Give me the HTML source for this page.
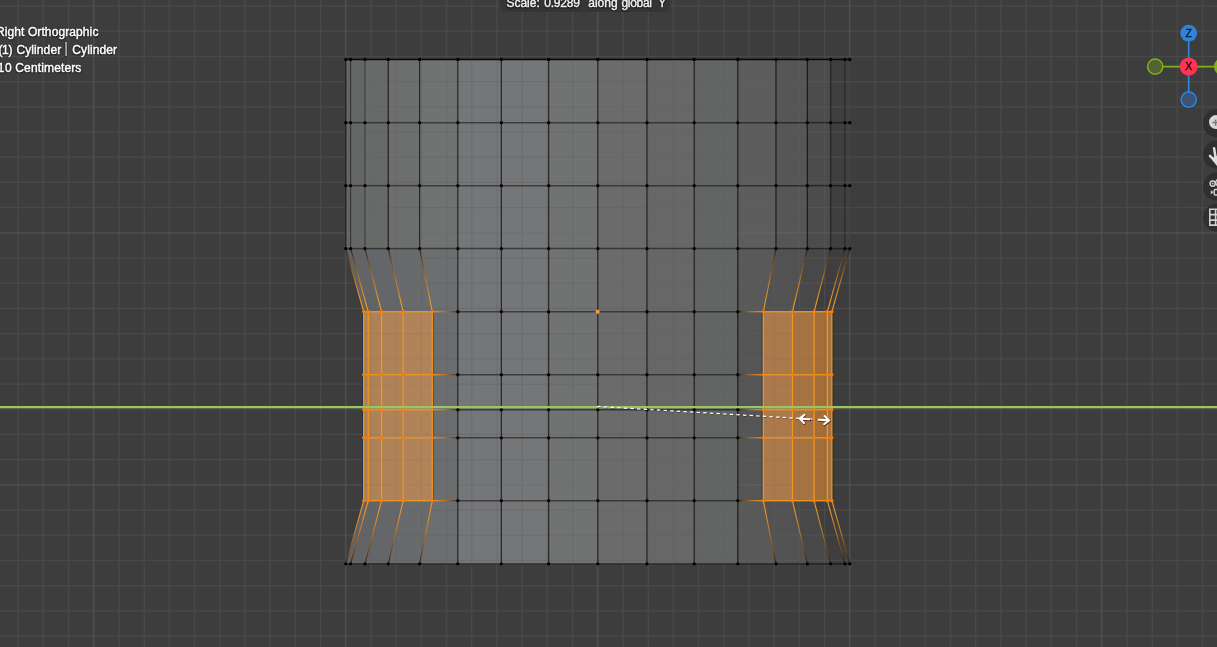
<!DOCTYPE html>
<html><head><meta charset="utf-8"><title>Blender viewport</title>
<style>
html,body{margin:0;padding:0;background:#3d3d3d;}
body{width:1217px;height:647px;overflow:hidden;position:relative;font-family:"Liberation Sans",sans-serif;}
.layer{position:absolute;left:0;top:0;width:1217px;height:647px;transform:translateZ(0);will-change:transform}
.w,.h{position:absolute;white-space:pre;color:#fff}
.w{text-shadow:0 1px 1.5px rgba(0,0,0,.95),0 0 2px rgba(0,0,0,.75);-webkit-text-stroke:0.42px #fff}
.h{color:#f2f2f2;-webkit-text-stroke:0.4px #f2f2f2;text-shadow:0 1px 1.5px rgba(0,0,0,.95),0 0 2px rgba(0,0,0,.8)}
.bar{-webkit-text-stroke:0;transform:scaleX(.8)}
.ln{font-size:0;line-height:0;height:0}
.hdr{position:absolute;left:500.3px;top:-8px;width:170px;height:20.2px;background:#353535;border-radius:0 0 6px 6px;}
</style></head><body>
<svg width="1217" height="647" viewBox="0 0 1217 647" style="position:absolute;left:0;top:0;transform:translateZ(0);will-change:transform">
<defs><clipPath id="mc"><polygon points="345.8,59.5 345.8,122.65 345.8,185.65 345.8,248.6 363.72,311.75 363.72,374.75 363.72,409.75 363.72,437.8 363.72,500.7 345.8,563.8 849.8,563.8 831.88,500.7 831.88,437.8 831.88,409.75 831.88,374.75 831.88,311.75 849.8,248.6 849.8,185.65 849.8,122.65 849.8,59.5"/></clipPath></defs>
<rect width="1217" height="647" fill="#3d3d3d"/>
<g stroke="none">
<polygon points="345.8,59.5 350.64,59.5 350.64,122.65 345.8,122.65" fill="#646566" stroke="#646566" stroke-width="0.6"/>
<polygon points="350.64,59.5 364.98,59.5 364.98,122.65 350.64,122.65" fill="#656666" stroke="#656666" stroke-width="0.6"/>
<polygon points="364.98,59.5 388.27,59.5 388.27,122.65 364.98,122.65" fill="#686a69" stroke="#686a69" stroke-width="0.6"/>
<polygon points="388.27,59.5 419.61,59.5 419.61,122.65 388.27,122.65" fill="#6d6e6e" stroke="#6d6e6e" stroke-width="0.6"/>
<polygon points="419.61,59.5 457.8,59.5 457.8,122.65 419.61,122.65" fill="#717272" stroke="#717272" stroke-width="0.6"/>
<polygon points="457.8,59.5 501.36,59.5 501.36,122.65 457.8,122.65" fill="#757678" stroke="#757678" stroke-width="0.6"/>
<polygon points="501.36,59.5 548.64,59.5 548.64,122.65 501.36,122.65" fill="#757677" stroke="#757677" stroke-width="0.6"/>
<polygon points="548.64,59.5 597.8,59.5 597.8,122.65 548.64,122.65" fill="#717372" stroke="#717372" stroke-width="0.6"/>
<polygon points="597.8,59.5 646.96,59.5 646.96,122.65 597.8,122.65" fill="#6b6b6b" stroke="#6b6b6b" stroke-width="0.6"/>
<polygon points="646.96,59.5 694.24,59.5 694.24,122.65 646.96,122.65" fill="#676767" stroke="#676767" stroke-width="0.6"/>
<polygon points="694.24,59.5 737.8,59.5 737.8,122.65 694.24,122.65" fill="#636464" stroke="#636464" stroke-width="0.6"/>
<polygon points="737.8,59.5 775.99,59.5 775.99,122.65 737.8,122.65" fill="#5d5d5d" stroke="#5d5d5d" stroke-width="0.6"/>
<polygon points="775.99,59.5 807.33,59.5 807.33,122.65 775.99,122.65" fill="#565656" stroke="#565656" stroke-width="0.6"/>
<polygon points="807.33,59.5 830.62,59.5 830.62,122.65 807.33,122.65" fill="#4c4c4c" stroke="#4c4c4c" stroke-width="0.6"/>
<polygon points="830.62,59.5 844.96,59.5 844.96,122.65 830.62,122.65" fill="#3f3f3f" stroke="#3f3f3f" stroke-width="0.6"/>
<polygon points="844.96,59.5 849.8,59.5 849.8,122.65 844.96,122.65" fill="#414141" stroke="#414141" stroke-width="0.6"/>
<polygon points="345.8,122.65 350.64,122.65 350.64,185.65 345.8,185.65" fill="#646566" stroke="#646566" stroke-width="0.6"/>
<polygon points="350.64,122.65 364.98,122.65 364.98,185.65 350.64,185.65" fill="#656666" stroke="#656666" stroke-width="0.6"/>
<polygon points="364.98,122.65 388.27,122.65 388.27,185.65 364.98,185.65" fill="#686a69" stroke="#686a69" stroke-width="0.6"/>
<polygon points="388.27,122.65 419.61,122.65 419.61,185.65 388.27,185.65" fill="#6d6e6e" stroke="#6d6e6e" stroke-width="0.6"/>
<polygon points="419.61,122.65 457.8,122.65 457.8,185.65 419.61,185.65" fill="#717272" stroke="#717272" stroke-width="0.6"/>
<polygon points="457.8,122.65 501.36,122.65 501.36,185.65 457.8,185.65" fill="#757678" stroke="#757678" stroke-width="0.6"/>
<polygon points="501.36,122.65 548.64,122.65 548.64,185.65 501.36,185.65" fill="#757677" stroke="#757677" stroke-width="0.6"/>
<polygon points="548.64,122.65 597.8,122.65 597.8,185.65 548.64,185.65" fill="#717372" stroke="#717372" stroke-width="0.6"/>
<polygon points="597.8,122.65 646.96,122.65 646.96,185.65 597.8,185.65" fill="#6b6b6b" stroke="#6b6b6b" stroke-width="0.6"/>
<polygon points="646.96,122.65 694.24,122.65 694.24,185.65 646.96,185.65" fill="#676767" stroke="#676767" stroke-width="0.6"/>
<polygon points="694.24,122.65 737.8,122.65 737.8,185.65 694.24,185.65" fill="#636464" stroke="#636464" stroke-width="0.6"/>
<polygon points="737.8,122.65 775.99,122.65 775.99,185.65 737.8,185.65" fill="#5d5d5d" stroke="#5d5d5d" stroke-width="0.6"/>
<polygon points="775.99,122.65 807.33,122.65 807.33,185.65 775.99,185.65" fill="#565656" stroke="#565656" stroke-width="0.6"/>
<polygon points="807.33,122.65 830.62,122.65 830.62,185.65 807.33,185.65" fill="#4c4c4c" stroke="#4c4c4c" stroke-width="0.6"/>
<polygon points="830.62,122.65 844.96,122.65 844.96,185.65 830.62,185.65" fill="#3f3f3f" stroke="#3f3f3f" stroke-width="0.6"/>
<polygon points="844.96,122.65 849.8,122.65 849.8,185.65 844.96,185.65" fill="#414141" stroke="#414141" stroke-width="0.6"/>
<polygon points="345.8,185.65 350.64,185.65 350.64,248.6 345.8,248.6" fill="#646566" stroke="#646566" stroke-width="0.6"/>
<polygon points="350.64,185.65 364.98,185.65 364.98,248.6 350.64,248.6" fill="#656666" stroke="#656666" stroke-width="0.6"/>
<polygon points="364.98,185.65 388.27,185.65 388.27,248.6 364.98,248.6" fill="#686a69" stroke="#686a69" stroke-width="0.6"/>
<polygon points="388.27,185.65 419.61,185.65 419.61,248.6 388.27,248.6" fill="#6d6e6e" stroke="#6d6e6e" stroke-width="0.6"/>
<polygon points="419.61,185.65 457.8,185.65 457.8,248.6 419.61,248.6" fill="#717272" stroke="#717272" stroke-width="0.6"/>
<polygon points="457.8,185.65 501.36,185.65 501.36,248.6 457.8,248.6" fill="#757678" stroke="#757678" stroke-width="0.6"/>
<polygon points="501.36,185.65 548.64,185.65 548.64,248.6 501.36,248.6" fill="#757677" stroke="#757677" stroke-width="0.6"/>
<polygon points="548.64,185.65 597.8,185.65 597.8,248.6 548.64,248.6" fill="#717372" stroke="#717372" stroke-width="0.6"/>
<polygon points="597.8,185.65 646.96,185.65 646.96,248.6 597.8,248.6" fill="#6b6b6b" stroke="#6b6b6b" stroke-width="0.6"/>
<polygon points="646.96,185.65 694.24,185.65 694.24,248.6 646.96,248.6" fill="#676767" stroke="#676767" stroke-width="0.6"/>
<polygon points="694.24,185.65 737.8,185.65 737.8,248.6 694.24,248.6" fill="#636464" stroke="#636464" stroke-width="0.6"/>
<polygon points="737.8,185.65 775.99,185.65 775.99,248.6 737.8,248.6" fill="#5d5d5d" stroke="#5d5d5d" stroke-width="0.6"/>
<polygon points="775.99,185.65 807.33,185.65 807.33,248.6 775.99,248.6" fill="#565656" stroke="#565656" stroke-width="0.6"/>
<polygon points="807.33,185.65 830.62,185.65 830.62,248.6 807.33,248.6" fill="#4c4c4c" stroke="#4c4c4c" stroke-width="0.6"/>
<polygon points="830.62,185.65 844.96,185.65 844.96,248.6 830.62,248.6" fill="#3f3f3f" stroke="#3f3f3f" stroke-width="0.6"/>
<polygon points="844.96,185.65 849.8,185.65 849.8,248.6 844.96,248.6" fill="#414141" stroke="#414141" stroke-width="0.6"/>
<polygon points="345.8,248.6 350.64,248.6 368.22,311.75 363.72,311.75" fill="#626365" stroke="#626365" stroke-width="0.6"/>
<polygon points="350.64,248.6 364.98,248.6 381.54,311.75 368.22,311.75" fill="#636466" stroke="#636466" stroke-width="0.6"/>
<polygon points="364.98,248.6 388.27,248.6 403.17,311.75 381.54,311.75" fill="#656669" stroke="#656669" stroke-width="0.6"/>
<polygon points="388.27,248.6 419.61,248.6 432.28,311.75 403.17,311.75" fill="#696a6c" stroke="#696a6c" stroke-width="0.6"/>
<polygon points="419.61,248.6 457.8,248.6 457.8,311.75 432.28,311.75" fill="#6d6e70" stroke="#6d6e70" stroke-width="0.6"/>
<polygon points="457.8,248.6 501.36,248.6 501.36,311.75 457.8,311.75" fill="#757678" stroke="#757678" stroke-width="0.6"/>
<polygon points="501.36,248.6 548.64,248.6 548.64,311.75 501.36,311.75" fill="#757677" stroke="#757677" stroke-width="0.6"/>
<polygon points="548.64,248.6 597.8,248.6 597.8,311.75 548.64,311.75" fill="#717372" stroke="#717372" stroke-width="0.6"/>
<polygon points="597.8,248.6 646.96,248.6 646.96,311.75 597.8,311.75" fill="#6b6b6b" stroke="#6b6b6b" stroke-width="0.6"/>
<polygon points="646.96,248.6 694.24,248.6 694.24,311.75 646.96,311.75" fill="#676767" stroke="#676767" stroke-width="0.6"/>
<polygon points="694.24,248.6 737.8,248.6 737.8,311.75 694.24,311.75" fill="#636464" stroke="#636464" stroke-width="0.6"/>
<polygon points="737.8,248.6 775.99,248.6 763.32,311.75 737.8,311.75" fill="#595959" stroke="#595959" stroke-width="0.6"/>
<polygon points="775.99,248.6 807.33,248.6 792.43,311.75 763.32,311.75" fill="#525252" stroke="#525252" stroke-width="0.6"/>
<polygon points="807.33,248.6 830.62,248.6 814.06,311.75 792.43,311.75" fill="#484848" stroke="#484848" stroke-width="0.6"/>
<polygon points="830.62,248.6 844.96,248.6 827.38,311.75 814.06,311.75" fill="#3e3e3e" stroke="#3e3e3e" stroke-width="0.6"/>
<polygon points="844.96,248.6 849.8,248.6 831.88,311.75 827.38,311.75" fill="#3f3f3f" stroke="#3f3f3f" stroke-width="0.6"/>
<polygon points="432.28,311.75 457.8,311.75 457.8,374.75 432.28,374.75" fill="#6c6d6f" stroke="#6c6d6f" stroke-width="0.6"/>
<polygon points="457.8,311.75 501.36,311.75 501.36,374.75 457.8,374.75" fill="#757678" stroke="#757678" stroke-width="0.6"/>
<polygon points="501.36,311.75 548.64,311.75 548.64,374.75 501.36,374.75" fill="#757677" stroke="#757677" stroke-width="0.6"/>
<polygon points="548.64,311.75 597.8,311.75 597.8,374.75 548.64,374.75" fill="#717372" stroke="#717372" stroke-width="0.6"/>
<polygon points="597.8,311.75 646.96,311.75 646.96,374.75 597.8,374.75" fill="#6b6b6b" stroke="#6b6b6b" stroke-width="0.6"/>
<polygon points="646.96,311.75 694.24,311.75 694.24,374.75 646.96,374.75" fill="#676767" stroke="#676767" stroke-width="0.6"/>
<polygon points="694.24,311.75 737.8,311.75 737.8,374.75 694.24,374.75" fill="#636464" stroke="#636464" stroke-width="0.6"/>
<polygon points="737.8,311.75 763.32,311.75 763.32,374.75 737.8,374.75" fill="#555555" stroke="#555555" stroke-width="0.6"/>
<polygon points="432.28,374.75 457.8,374.75 457.8,409.75 432.28,409.75" fill="#6c6d6f" stroke="#6c6d6f" stroke-width="0.6"/>
<polygon points="457.8,374.75 501.36,374.75 501.36,409.75 457.8,409.75" fill="#757678" stroke="#757678" stroke-width="0.6"/>
<polygon points="501.36,374.75 548.64,374.75 548.64,409.75 501.36,409.75" fill="#757677" stroke="#757677" stroke-width="0.6"/>
<polygon points="548.64,374.75 597.8,374.75 597.8,409.75 548.64,409.75" fill="#717372" stroke="#717372" stroke-width="0.6"/>
<polygon points="597.8,374.75 646.96,374.75 646.96,409.75 597.8,409.75" fill="#6b6b6b" stroke="#6b6b6b" stroke-width="0.6"/>
<polygon points="646.96,374.75 694.24,374.75 694.24,409.75 646.96,409.75" fill="#676767" stroke="#676767" stroke-width="0.6"/>
<polygon points="694.24,374.75 737.8,374.75 737.8,409.75 694.24,409.75" fill="#636464" stroke="#636464" stroke-width="0.6"/>
<polygon points="737.8,374.75 763.32,374.75 763.32,409.75 737.8,409.75" fill="#555555" stroke="#555555" stroke-width="0.6"/>
<polygon points="432.28,409.75 457.8,409.75 457.8,437.8 432.28,437.8" fill="#6c6d6f" stroke="#6c6d6f" stroke-width="0.6"/>
<polygon points="457.8,409.75 501.36,409.75 501.36,437.8 457.8,437.8" fill="#757678" stroke="#757678" stroke-width="0.6"/>
<polygon points="501.36,409.75 548.64,409.75 548.64,437.8 501.36,437.8" fill="#757677" stroke="#757677" stroke-width="0.6"/>
<polygon points="548.64,409.75 597.8,409.75 597.8,437.8 548.64,437.8" fill="#717372" stroke="#717372" stroke-width="0.6"/>
<polygon points="597.8,409.75 646.96,409.75 646.96,437.8 597.8,437.8" fill="#6b6b6b" stroke="#6b6b6b" stroke-width="0.6"/>
<polygon points="646.96,409.75 694.24,409.75 694.24,437.8 646.96,437.8" fill="#676767" stroke="#676767" stroke-width="0.6"/>
<polygon points="694.24,409.75 737.8,409.75 737.8,437.8 694.24,437.8" fill="#636464" stroke="#636464" stroke-width="0.6"/>
<polygon points="737.8,409.75 763.32,409.75 763.32,437.8 737.8,437.8" fill="#555555" stroke="#555555" stroke-width="0.6"/>
<polygon points="432.28,437.8 457.8,437.8 457.8,500.7 432.28,500.7" fill="#6c6d6f" stroke="#6c6d6f" stroke-width="0.6"/>
<polygon points="457.8,437.8 501.36,437.8 501.36,500.7 457.8,500.7" fill="#757678" stroke="#757678" stroke-width="0.6"/>
<polygon points="501.36,437.8 548.64,437.8 548.64,500.7 501.36,500.7" fill="#757677" stroke="#757677" stroke-width="0.6"/>
<polygon points="548.64,437.8 597.8,437.8 597.8,500.7 548.64,500.7" fill="#717372" stroke="#717372" stroke-width="0.6"/>
<polygon points="597.8,437.8 646.96,437.8 646.96,500.7 597.8,500.7" fill="#6b6b6b" stroke="#6b6b6b" stroke-width="0.6"/>
<polygon points="646.96,437.8 694.24,437.8 694.24,500.7 646.96,500.7" fill="#676767" stroke="#676767" stroke-width="0.6"/>
<polygon points="694.24,437.8 737.8,437.8 737.8,500.7 694.24,500.7" fill="#636464" stroke="#636464" stroke-width="0.6"/>
<polygon points="737.8,437.8 763.32,437.8 763.32,500.7 737.8,500.7" fill="#555555" stroke="#555555" stroke-width="0.6"/>
<polygon points="363.72,500.7 368.22,500.7 350.64,563.8 345.8,563.8" fill="#626365" stroke="#626365" stroke-width="0.6"/>
<polygon points="368.22,500.7 381.54,500.7 364.98,563.8 350.64,563.8" fill="#636466" stroke="#636466" stroke-width="0.6"/>
<polygon points="381.54,500.7 403.17,500.7 388.27,563.8 364.98,563.8" fill="#656669" stroke="#656669" stroke-width="0.6"/>
<polygon points="403.17,500.7 432.28,500.7 419.61,563.8 388.27,563.8" fill="#696a6c" stroke="#696a6c" stroke-width="0.6"/>
<polygon points="432.28,500.7 457.8,500.7 457.8,563.8 419.61,563.8" fill="#6d6e70" stroke="#6d6e70" stroke-width="0.6"/>
<polygon points="457.8,500.7 501.36,500.7 501.36,563.8 457.8,563.8" fill="#757678" stroke="#757678" stroke-width="0.6"/>
<polygon points="501.36,500.7 548.64,500.7 548.64,563.8 501.36,563.8" fill="#757677" stroke="#757677" stroke-width="0.6"/>
<polygon points="548.64,500.7 597.8,500.7 597.8,563.8 548.64,563.8" fill="#717372" stroke="#717372" stroke-width="0.6"/>
<polygon points="597.8,500.7 646.96,500.7 646.96,563.8 597.8,563.8" fill="#6b6b6b" stroke="#6b6b6b" stroke-width="0.6"/>
<polygon points="646.96,500.7 694.24,500.7 694.24,563.8 646.96,563.8" fill="#676767" stroke="#676767" stroke-width="0.6"/>
<polygon points="694.24,500.7 737.8,500.7 737.8,563.8 694.24,563.8" fill="#636464" stroke="#636464" stroke-width="0.6"/>
<polygon points="737.8,500.7 763.32,500.7 775.99,563.8 737.8,563.8" fill="#595959" stroke="#595959" stroke-width="0.6"/>
<polygon points="763.32,500.7 792.43,500.7 807.33,563.8 775.99,563.8" fill="#525252" stroke="#525252" stroke-width="0.6"/>
<polygon points="792.43,500.7 814.06,500.7 830.62,563.8 807.33,563.8" fill="#484848" stroke="#484848" stroke-width="0.6"/>
<polygon points="814.06,500.7 827.38,500.7 844.96,563.8 830.62,563.8" fill="#3e3e3e" stroke="#3e3e3e" stroke-width="0.6"/>
<polygon points="827.38,500.7 831.88,500.7 849.8,563.8 844.96,563.8" fill="#3f3f3f" stroke="#3f3f3f" stroke-width="0.6"/>
</g>
<g opacity="0.37"><path d="M18.2 0V647M43.4 0V647M68.6 0V647M119 0V647M144.2 0V647M169.4 0V647M194.6 0V647M219.8 0V647M245 0V647M270.2 0V647M295.4 0V647M320.6 0V647M371 0V647M396.2 0V647M421.4 0V647M446.6 0V647M471.8 0V647M497 0V647M522.2 0V647M547.4 0V647M572.6 0V647M623 0V647M648.2 0V647M673.4 0V647M698.6 0V647M723.8 0V647M749 0V647M774.2 0V647M799.4 0V647M824.6 0V647M875 0V647M900.2 0V647M925.4 0V647M950.6 0V647M975.8 0V647M1001 0V647M1026.2 0V647M1051.4 0V647M1076.6 0V647M1127 0V647M1152.2 0V647M1177.4 0V647M1202.6 0V647M0 6H1217M0 31.2H1217M0 56.4H1217M0 81.6H1217M0 106.8H1217M0 132H1217M0 157.2H1217M0 182.4H1217M0 207.6H1217M0 258H1217M0 283.2H1217M0 308.4H1217M0 333.6H1217M0 358.8H1217M0 384H1217M0 409.2H1217M0 434.4H1217M0 459.6H1217M0 510H1217M0 535.2H1217M0 560.4H1217M0 585.6H1217M0 610.8H1217M0 636H1217" stroke="#606060" stroke-width="1.25" fill="none"/><path d="M93.8 0V647M345.8 0V647M597.8 0V647M849.8 0V647M1101.8 0V647M0 232.8H1217M0 484.8H1217" stroke="#606060" stroke-width="1.25" fill="none"/></g>
<g opacity="0.09"><path d="M93.8 0V647M345.8 0V647M597.8 0V647M849.8 0V647M1101.8 0V647M0 232.8H1217M0 484.8H1217" stroke="#909090" stroke-width="1.9" fill="none"/></g>
<g stroke="none">
<polygon points="363.72,311.75 368.22,311.75 368.22,374.75 363.72,374.75" fill="#ac7e52" stroke="#ac7e52" stroke-width="0.6"/>
<polygon points="368.22,311.75 381.54,311.75 381.54,374.75 368.22,374.75" fill="#af8156" stroke="#af8156" stroke-width="0.6"/>
<polygon points="381.54,311.75 403.17,311.75 403.17,374.75 381.54,374.75" fill="#b08258" stroke="#b08258" stroke-width="0.6"/>
<polygon points="403.17,311.75 432.28,311.75 432.28,374.75 403.17,374.75" fill="#b18359" stroke="#b18359" stroke-width="0.6"/>
<polygon points="763.32,311.75 792.43,311.75 792.43,374.75 763.32,374.75" fill="#ab794b" stroke="#ab794b" stroke-width="0.6"/>
<polygon points="792.43,311.75 814.06,311.75 814.06,374.75 792.43,374.75" fill="#a77341" stroke="#a77341" stroke-width="0.6"/>
<polygon points="814.06,311.75 827.38,311.75 827.38,374.75 814.06,374.75" fill="#a36e37" stroke="#a36e37" stroke-width="0.6"/>
<polygon points="827.38,311.75 831.88,311.75 831.88,374.75 827.38,374.75" fill="#a87238" stroke="#a87238" stroke-width="0.6"/>
<polygon points="363.72,374.75 368.22,374.75 368.22,409.75 363.72,409.75" fill="#ac7e52" stroke="#ac7e52" stroke-width="0.6"/>
<polygon points="368.22,374.75 381.54,374.75 381.54,409.75 368.22,409.75" fill="#af8156" stroke="#af8156" stroke-width="0.6"/>
<polygon points="381.54,374.75 403.17,374.75 403.17,409.75 381.54,409.75" fill="#b08258" stroke="#b08258" stroke-width="0.6"/>
<polygon points="403.17,374.75 432.28,374.75 432.28,409.75 403.17,409.75" fill="#b18359" stroke="#b18359" stroke-width="0.6"/>
<polygon points="763.32,374.75 792.43,374.75 792.43,409.75 763.32,409.75" fill="#ab794b" stroke="#ab794b" stroke-width="0.6"/>
<polygon points="792.43,374.75 814.06,374.75 814.06,409.75 792.43,409.75" fill="#a77341" stroke="#a77341" stroke-width="0.6"/>
<polygon points="814.06,374.75 827.38,374.75 827.38,409.75 814.06,409.75" fill="#a36e37" stroke="#a36e37" stroke-width="0.6"/>
<polygon points="827.38,374.75 831.88,374.75 831.88,409.75 827.38,409.75" fill="#a87238" stroke="#a87238" stroke-width="0.6"/>
<polygon points="363.72,409.75 368.22,409.75 368.22,437.8 363.72,437.8" fill="#ac7e52" stroke="#ac7e52" stroke-width="0.6"/>
<polygon points="368.22,409.75 381.54,409.75 381.54,437.8 368.22,437.8" fill="#af8156" stroke="#af8156" stroke-width="0.6"/>
<polygon points="381.54,409.75 403.17,409.75 403.17,437.8 381.54,437.8" fill="#b08258" stroke="#b08258" stroke-width="0.6"/>
<polygon points="403.17,409.75 432.28,409.75 432.28,437.8 403.17,437.8" fill="#b18359" stroke="#b18359" stroke-width="0.6"/>
<polygon points="763.32,409.75 792.43,409.75 792.43,437.8 763.32,437.8" fill="#ab794b" stroke="#ab794b" stroke-width="0.6"/>
<polygon points="792.43,409.75 814.06,409.75 814.06,437.8 792.43,437.8" fill="#a77341" stroke="#a77341" stroke-width="0.6"/>
<polygon points="814.06,409.75 827.38,409.75 827.38,437.8 814.06,437.8" fill="#a36e37" stroke="#a36e37" stroke-width="0.6"/>
<polygon points="827.38,409.75 831.88,409.75 831.88,437.8 827.38,437.8" fill="#a87238" stroke="#a87238" stroke-width="0.6"/>
<polygon points="363.72,437.8 368.22,437.8 368.22,500.7 363.72,500.7" fill="#ac7e52" stroke="#ac7e52" stroke-width="0.6"/>
<polygon points="368.22,437.8 381.54,437.8 381.54,500.7 368.22,500.7" fill="#af8156" stroke="#af8156" stroke-width="0.6"/>
<polygon points="381.54,437.8 403.17,437.8 403.17,500.7 381.54,500.7" fill="#b08258" stroke="#b08258" stroke-width="0.6"/>
<polygon points="403.17,437.8 432.28,437.8 432.28,500.7 403.17,500.7" fill="#b18359" stroke="#b18359" stroke-width="0.6"/>
<polygon points="763.32,437.8 792.43,437.8 792.43,500.7 763.32,500.7" fill="#ab794b" stroke="#ab794b" stroke-width="0.6"/>
<polygon points="792.43,437.8 814.06,437.8 814.06,500.7 792.43,500.7" fill="#a77341" stroke="#a77341" stroke-width="0.6"/>
<polygon points="814.06,437.8 827.38,437.8 827.38,500.7 814.06,500.7" fill="#a36e37" stroke="#a36e37" stroke-width="0.6"/>
<polygon points="827.38,437.8 831.88,437.8 831.88,500.7 827.38,500.7" fill="#a87238" stroke="#a87238" stroke-width="0.6"/>
</g>
<clipPath id="sc"><rect x="363.72" y="311.75" width="68.56" height="188.95"/><rect x="763.32" y="311.75" width="68.56" height="188.95"/></clipPath>
<g clip-path="url(#sc)" opacity="0.1"><path d="M18.2 0V647M43.4 0V647M68.6 0V647M119 0V647M144.2 0V647M169.4 0V647M194.6 0V647M219.8 0V647M245 0V647M270.2 0V647M295.4 0V647M320.6 0V647M371 0V647M396.2 0V647M421.4 0V647M446.6 0V647M471.8 0V647M497 0V647M522.2 0V647M547.4 0V647M572.6 0V647M623 0V647M648.2 0V647M673.4 0V647M698.6 0V647M723.8 0V647M749 0V647M774.2 0V647M799.4 0V647M824.6 0V647M875 0V647M900.2 0V647M925.4 0V647M950.6 0V647M975.8 0V647M1001 0V647M1026.2 0V647M1051.4 0V647M1076.6 0V647M1127 0V647M1152.2 0V647M1177.4 0V647M1202.6 0V647M0 6H1217M0 31.2H1217M0 56.4H1217M0 81.6H1217M0 106.8H1217M0 132H1217M0 157.2H1217M0 182.4H1217M0 207.6H1217M0 258H1217M0 283.2H1217M0 308.4H1217M0 333.6H1217M0 358.8H1217M0 384H1217M0 409.2H1217M0 434.4H1217M0 459.6H1217M0 510H1217M0 535.2H1217M0 560.4H1217M0 585.6H1217M0 610.8H1217M0 636H1217" stroke="#606060" stroke-width="1.25" fill="none"/><path d="M93.8 0V647M345.8 0V647M597.8 0V647M849.8 0V647M1101.8 0V647M0 232.8H1217M0 484.8H1217" stroke="#606060" stroke-width="1.25" fill="none"/></g>
<defs><linearGradient id="g1" gradientUnits="userSpaceOnUse" x1="345.8" y1="248.6" x2="363.72" y2="311.75"><stop offset="0" stop-color="#1c1006" stop-opacity="0.8"/><stop offset="0.18" stop-color="#6b4216" stop-opacity="0.9"/><stop offset="0.5" stop-color="#bd7a26" stop-opacity="0.95"/><stop offset="0.85" stop-color="#ee9826" stop-opacity="1"/><stop offset="1" stop-color="#ee9826" stop-opacity="1"/></linearGradient><linearGradient id="g2" gradientUnits="userSpaceOnUse" x1="345.8" y1="563.8" x2="363.72" y2="500.7"><stop offset="0" stop-color="#1c1006" stop-opacity="0.8"/><stop offset="0.18" stop-color="#6b4216" stop-opacity="0.9"/><stop offset="0.5" stop-color="#bd7a26" stop-opacity="0.95"/><stop offset="0.85" stop-color="#ee9826" stop-opacity="1"/><stop offset="1" stop-color="#ee9826" stop-opacity="1"/></linearGradient><linearGradient id="g3" gradientUnits="userSpaceOnUse" x1="350.64" y1="248.6" x2="368.22" y2="311.75"><stop offset="0" stop-color="#1c1006" stop-opacity="0.8"/><stop offset="0.18" stop-color="#6b4216" stop-opacity="0.9"/><stop offset="0.5" stop-color="#bd7a26" stop-opacity="0.95"/><stop offset="0.85" stop-color="#ee9826" stop-opacity="1"/><stop offset="1" stop-color="#ee9826" stop-opacity="1"/></linearGradient><linearGradient id="g4" gradientUnits="userSpaceOnUse" x1="350.64" y1="563.8" x2="368.22" y2="500.7"><stop offset="0" stop-color="#1c1006" stop-opacity="0.8"/><stop offset="0.18" stop-color="#6b4216" stop-opacity="0.9"/><stop offset="0.5" stop-color="#bd7a26" stop-opacity="0.95"/><stop offset="0.85" stop-color="#ee9826" stop-opacity="1"/><stop offset="1" stop-color="#ee9826" stop-opacity="1"/></linearGradient><linearGradient id="g5" gradientUnits="userSpaceOnUse" x1="364.98" y1="248.6" x2="381.54" y2="311.75"><stop offset="0" stop-color="#1c1006" stop-opacity="0.8"/><stop offset="0.18" stop-color="#6b4216" stop-opacity="0.9"/><stop offset="0.5" stop-color="#bd7a26" stop-opacity="0.95"/><stop offset="0.85" stop-color="#ee9826" stop-opacity="1"/><stop offset="1" stop-color="#ee9826" stop-opacity="1"/></linearGradient><linearGradient id="g6" gradientUnits="userSpaceOnUse" x1="364.98" y1="563.8" x2="381.54" y2="500.7"><stop offset="0" stop-color="#1c1006" stop-opacity="0.8"/><stop offset="0.18" stop-color="#6b4216" stop-opacity="0.9"/><stop offset="0.5" stop-color="#bd7a26" stop-opacity="0.95"/><stop offset="0.85" stop-color="#ee9826" stop-opacity="1"/><stop offset="1" stop-color="#ee9826" stop-opacity="1"/></linearGradient><linearGradient id="g7" gradientUnits="userSpaceOnUse" x1="388.27" y1="248.6" x2="403.17" y2="311.75"><stop offset="0" stop-color="#1c1006" stop-opacity="0.8"/><stop offset="0.18" stop-color="#6b4216" stop-opacity="0.9"/><stop offset="0.5" stop-color="#bd7a26" stop-opacity="0.95"/><stop offset="0.85" stop-color="#ee9826" stop-opacity="1"/><stop offset="1" stop-color="#ee9826" stop-opacity="1"/></linearGradient><linearGradient id="g8" gradientUnits="userSpaceOnUse" x1="388.27" y1="563.8" x2="403.17" y2="500.7"><stop offset="0" stop-color="#1c1006" stop-opacity="0.8"/><stop offset="0.18" stop-color="#6b4216" stop-opacity="0.9"/><stop offset="0.5" stop-color="#bd7a26" stop-opacity="0.95"/><stop offset="0.85" stop-color="#ee9826" stop-opacity="1"/><stop offset="1" stop-color="#ee9826" stop-opacity="1"/></linearGradient><linearGradient id="g9" gradientUnits="userSpaceOnUse" x1="419.61" y1="248.6" x2="432.28" y2="311.75"><stop offset="0" stop-color="#1c1006" stop-opacity="0.8"/><stop offset="0.18" stop-color="#6b4216" stop-opacity="0.9"/><stop offset="0.5" stop-color="#bd7a26" stop-opacity="0.95"/><stop offset="0.85" stop-color="#ee9826" stop-opacity="1"/><stop offset="1" stop-color="#ee9826" stop-opacity="1"/></linearGradient><linearGradient id="g10" gradientUnits="userSpaceOnUse" x1="419.61" y1="563.8" x2="432.28" y2="500.7"><stop offset="0" stop-color="#1c1006" stop-opacity="0.8"/><stop offset="0.18" stop-color="#6b4216" stop-opacity="0.9"/><stop offset="0.5" stop-color="#bd7a26" stop-opacity="0.95"/><stop offset="0.85" stop-color="#ee9826" stop-opacity="1"/><stop offset="1" stop-color="#ee9826" stop-opacity="1"/></linearGradient><linearGradient id="g11" gradientUnits="userSpaceOnUse" x1="775.99" y1="248.6" x2="763.32" y2="311.75"><stop offset="0" stop-color="#1c1006" stop-opacity="0.8"/><stop offset="0.18" stop-color="#6b4216" stop-opacity="0.9"/><stop offset="0.5" stop-color="#bd7a26" stop-opacity="0.95"/><stop offset="0.85" stop-color="#ee9826" stop-opacity="1"/><stop offset="1" stop-color="#ee9826" stop-opacity="1"/></linearGradient><linearGradient id="g12" gradientUnits="userSpaceOnUse" x1="775.99" y1="563.8" x2="763.32" y2="500.7"><stop offset="0" stop-color="#1c1006" stop-opacity="0.8"/><stop offset="0.18" stop-color="#6b4216" stop-opacity="0.9"/><stop offset="0.5" stop-color="#bd7a26" stop-opacity="0.95"/><stop offset="0.85" stop-color="#ee9826" stop-opacity="1"/><stop offset="1" stop-color="#ee9826" stop-opacity="1"/></linearGradient><linearGradient id="g13" gradientUnits="userSpaceOnUse" x1="807.33" y1="248.6" x2="792.43" y2="311.75"><stop offset="0" stop-color="#1c1006" stop-opacity="0.8"/><stop offset="0.18" stop-color="#6b4216" stop-opacity="0.9"/><stop offset="0.5" stop-color="#bd7a26" stop-opacity="0.95"/><stop offset="0.85" stop-color="#ee9826" stop-opacity="1"/><stop offset="1" stop-color="#ee9826" stop-opacity="1"/></linearGradient><linearGradient id="g14" gradientUnits="userSpaceOnUse" x1="807.33" y1="563.8" x2="792.43" y2="500.7"><stop offset="0" stop-color="#1c1006" stop-opacity="0.8"/><stop offset="0.18" stop-color="#6b4216" stop-opacity="0.9"/><stop offset="0.5" stop-color="#bd7a26" stop-opacity="0.95"/><stop offset="0.85" stop-color="#ee9826" stop-opacity="1"/><stop offset="1" stop-color="#ee9826" stop-opacity="1"/></linearGradient><linearGradient id="g15" gradientUnits="userSpaceOnUse" x1="830.62" y1="248.6" x2="814.06" y2="311.75"><stop offset="0" stop-color="#1c1006" stop-opacity="0.8"/><stop offset="0.18" stop-color="#6b4216" stop-opacity="0.9"/><stop offset="0.5" stop-color="#bd7a26" stop-opacity="0.95"/><stop offset="0.85" stop-color="#ee9826" stop-opacity="1"/><stop offset="1" stop-color="#ee9826" stop-opacity="1"/></linearGradient><linearGradient id="g16" gradientUnits="userSpaceOnUse" x1="830.62" y1="563.8" x2="814.06" y2="500.7"><stop offset="0" stop-color="#1c1006" stop-opacity="0.8"/><stop offset="0.18" stop-color="#6b4216" stop-opacity="0.9"/><stop offset="0.5" stop-color="#bd7a26" stop-opacity="0.95"/><stop offset="0.85" stop-color="#ee9826" stop-opacity="1"/><stop offset="1" stop-color="#ee9826" stop-opacity="1"/></linearGradient><linearGradient id="g17" gradientUnits="userSpaceOnUse" x1="844.96" y1="248.6" x2="827.38" y2="311.75"><stop offset="0" stop-color="#1c1006" stop-opacity="0.8"/><stop offset="0.18" stop-color="#6b4216" stop-opacity="0.9"/><stop offset="0.5" stop-color="#bd7a26" stop-opacity="0.95"/><stop offset="0.85" stop-color="#ee9826" stop-opacity="1"/><stop offset="1" stop-color="#ee9826" stop-opacity="1"/></linearGradient><linearGradient id="g18" gradientUnits="userSpaceOnUse" x1="844.96" y1="563.8" x2="827.38" y2="500.7"><stop offset="0" stop-color="#1c1006" stop-opacity="0.8"/><stop offset="0.18" stop-color="#6b4216" stop-opacity="0.9"/><stop offset="0.5" stop-color="#bd7a26" stop-opacity="0.95"/><stop offset="0.85" stop-color="#ee9826" stop-opacity="1"/><stop offset="1" stop-color="#ee9826" stop-opacity="1"/></linearGradient><linearGradient id="g19" gradientUnits="userSpaceOnUse" x1="849.8" y1="248.6" x2="831.88" y2="311.75"><stop offset="0" stop-color="#1c1006" stop-opacity="0.8"/><stop offset="0.18" stop-color="#6b4216" stop-opacity="0.9"/><stop offset="0.5" stop-color="#bd7a26" stop-opacity="0.95"/><stop offset="0.85" stop-color="#ee9826" stop-opacity="1"/><stop offset="1" stop-color="#ee9826" stop-opacity="1"/></linearGradient><linearGradient id="g20" gradientUnits="userSpaceOnUse" x1="849.8" y1="563.8" x2="831.88" y2="500.7"><stop offset="0" stop-color="#1c1006" stop-opacity="0.8"/><stop offset="0.18" stop-color="#6b4216" stop-opacity="0.9"/><stop offset="0.5" stop-color="#bd7a26" stop-opacity="0.95"/><stop offset="0.85" stop-color="#ee9826" stop-opacity="1"/><stop offset="1" stop-color="#ee9826" stop-opacity="1"/></linearGradient><linearGradient id="g21" gradientUnits="userSpaceOnUse" x1="457.8" y1="311.75" x2="432.28" y2="311.75"><stop offset="0" stop-color="#1c1006" stop-opacity="0.8"/><stop offset="0.18" stop-color="#6b4216" stop-opacity="0.9"/><stop offset="0.5" stop-color="#bd7a26" stop-opacity="0.95"/><stop offset="0.85" stop-color="#ee9826" stop-opacity="1"/><stop offset="1" stop-color="#ee9826" stop-opacity="1"/></linearGradient><linearGradient id="g22" gradientUnits="userSpaceOnUse" x1="737.8" y1="311.75" x2="763.32" y2="311.75"><stop offset="0" stop-color="#1c1006" stop-opacity="0.8"/><stop offset="0.18" stop-color="#6b4216" stop-opacity="0.9"/><stop offset="0.5" stop-color="#bd7a26" stop-opacity="0.95"/><stop offset="0.85" stop-color="#ee9826" stop-opacity="1"/><stop offset="1" stop-color="#ee9826" stop-opacity="1"/></linearGradient><linearGradient id="g23" gradientUnits="userSpaceOnUse" x1="457.8" y1="374.75" x2="432.28" y2="374.75"><stop offset="0" stop-color="#1c1006" stop-opacity="0.8"/><stop offset="0.18" stop-color="#6b4216" stop-opacity="0.9"/><stop offset="0.5" stop-color="#bd7a26" stop-opacity="0.95"/><stop offset="0.85" stop-color="#ee9826" stop-opacity="1"/><stop offset="1" stop-color="#ee9826" stop-opacity="1"/></linearGradient><linearGradient id="g24" gradientUnits="userSpaceOnUse" x1="737.8" y1="374.75" x2="763.32" y2="374.75"><stop offset="0" stop-color="#1c1006" stop-opacity="0.8"/><stop offset="0.18" stop-color="#6b4216" stop-opacity="0.9"/><stop offset="0.5" stop-color="#bd7a26" stop-opacity="0.95"/><stop offset="0.85" stop-color="#ee9826" stop-opacity="1"/><stop offset="1" stop-color="#ee9826" stop-opacity="1"/></linearGradient><linearGradient id="g25" gradientUnits="userSpaceOnUse" x1="457.8" y1="409.75" x2="432.28" y2="409.75"><stop offset="0" stop-color="#1c1006" stop-opacity="0.8"/><stop offset="0.18" stop-color="#6b4216" stop-opacity="0.9"/><stop offset="0.5" stop-color="#bd7a26" stop-opacity="0.95"/><stop offset="0.85" stop-color="#ee9826" stop-opacity="1"/><stop offset="1" stop-color="#ee9826" stop-opacity="1"/></linearGradient><linearGradient id="g26" gradientUnits="userSpaceOnUse" x1="737.8" y1="409.75" x2="763.32" y2="409.75"><stop offset="0" stop-color="#1c1006" stop-opacity="0.8"/><stop offset="0.18" stop-color="#6b4216" stop-opacity="0.9"/><stop offset="0.5" stop-color="#bd7a26" stop-opacity="0.95"/><stop offset="0.85" stop-color="#ee9826" stop-opacity="1"/><stop offset="1" stop-color="#ee9826" stop-opacity="1"/></linearGradient><linearGradient id="g27" gradientUnits="userSpaceOnUse" x1="457.8" y1="437.8" x2="432.28" y2="437.8"><stop offset="0" stop-color="#1c1006" stop-opacity="0.8"/><stop offset="0.18" stop-color="#6b4216" stop-opacity="0.9"/><stop offset="0.5" stop-color="#bd7a26" stop-opacity="0.95"/><stop offset="0.85" stop-color="#ee9826" stop-opacity="1"/><stop offset="1" stop-color="#ee9826" stop-opacity="1"/></linearGradient><linearGradient id="g28" gradientUnits="userSpaceOnUse" x1="737.8" y1="437.8" x2="763.32" y2="437.8"><stop offset="0" stop-color="#1c1006" stop-opacity="0.8"/><stop offset="0.18" stop-color="#6b4216" stop-opacity="0.9"/><stop offset="0.5" stop-color="#bd7a26" stop-opacity="0.95"/><stop offset="0.85" stop-color="#ee9826" stop-opacity="1"/><stop offset="1" stop-color="#ee9826" stop-opacity="1"/></linearGradient><linearGradient id="g29" gradientUnits="userSpaceOnUse" x1="457.8" y1="500.7" x2="432.28" y2="500.7"><stop offset="0" stop-color="#1c1006" stop-opacity="0.8"/><stop offset="0.18" stop-color="#6b4216" stop-opacity="0.9"/><stop offset="0.5" stop-color="#bd7a26" stop-opacity="0.95"/><stop offset="0.85" stop-color="#ee9826" stop-opacity="1"/><stop offset="1" stop-color="#ee9826" stop-opacity="1"/></linearGradient><linearGradient id="g30" gradientUnits="userSpaceOnUse" x1="737.8" y1="500.7" x2="763.32" y2="500.7"><stop offset="0" stop-color="#1c1006" stop-opacity="0.8"/><stop offset="0.18" stop-color="#6b4216" stop-opacity="0.9"/><stop offset="0.5" stop-color="#bd7a26" stop-opacity="0.95"/><stop offset="0.85" stop-color="#ee9826" stop-opacity="1"/><stop offset="1" stop-color="#ee9826" stop-opacity="1"/></linearGradient></defs>
<g fill="none"><line x1="345.8" y1="59.5" x2="345.8" y2="122.65" stroke="#000" stroke-width="1.2" stroke-opacity="0.7"/><line x1="345.8" y1="122.65" x2="345.8" y2="185.65" stroke="#000" stroke-width="1.2" stroke-opacity="0.7"/><line x1="345.8" y1="185.65" x2="345.8" y2="248.6" stroke="#000" stroke-width="1.2" stroke-opacity="0.7"/><line x1="345.8" y1="248.6" x2="363.72" y2="311.75" stroke="url(#g1)" stroke-width="1.1"/><line x1="363.72" y1="311.75" x2="363.72" y2="374.75" stroke="#ee9826" stroke-width="1.3"/><line x1="363.72" y1="374.75" x2="363.72" y2="409.75" stroke="#ee9826" stroke-width="1.3"/><line x1="363.72" y1="409.75" x2="363.72" y2="437.8" stroke="#ee9826" stroke-width="1.3"/><line x1="363.72" y1="437.8" x2="363.72" y2="500.7" stroke="#ee9826" stroke-width="1.3"/><line x1="363.72" y1="500.7" x2="345.8" y2="563.8" stroke="url(#g2)" stroke-width="1.1"/><line x1="350.64" y1="59.5" x2="350.64" y2="122.65" stroke="#000" stroke-width="1.0" stroke-opacity="0.5"/><line x1="350.64" y1="122.65" x2="350.64" y2="185.65" stroke="#000" stroke-width="1.0" stroke-opacity="0.5"/><line x1="350.64" y1="185.65" x2="350.64" y2="248.6" stroke="#000" stroke-width="1.0" stroke-opacity="0.5"/><line x1="350.64" y1="248.6" x2="368.22" y2="311.75" stroke="url(#g3)" stroke-width="1.1"/><line x1="368.22" y1="311.75" x2="368.22" y2="374.75" stroke="#ee9826" stroke-width="1.3"/><line x1="368.22" y1="374.75" x2="368.22" y2="409.75" stroke="#ee9826" stroke-width="1.3"/><line x1="368.22" y1="409.75" x2="368.22" y2="437.8" stroke="#ee9826" stroke-width="1.3"/><line x1="368.22" y1="437.8" x2="368.22" y2="500.7" stroke="#ee9826" stroke-width="1.3"/><line x1="368.22" y1="500.7" x2="350.64" y2="563.8" stroke="url(#g4)" stroke-width="1.1"/><line x1="364.98" y1="59.5" x2="364.98" y2="122.65" stroke="#000" stroke-width="1.0" stroke-opacity="0.42"/><line x1="364.98" y1="122.65" x2="364.98" y2="185.65" stroke="#000" stroke-width="1.0" stroke-opacity="0.42"/><line x1="364.98" y1="185.65" x2="364.98" y2="248.6" stroke="#000" stroke-width="1.0" stroke-opacity="0.42"/><line x1="364.98" y1="248.6" x2="381.54" y2="311.75" stroke="url(#g5)" stroke-width="1.1"/><line x1="381.54" y1="311.75" x2="381.54" y2="374.75" stroke="#ee9826" stroke-width="1.3"/><line x1="381.54" y1="374.75" x2="381.54" y2="409.75" stroke="#ee9826" stroke-width="1.3"/><line x1="381.54" y1="409.75" x2="381.54" y2="437.8" stroke="#ee9826" stroke-width="1.3"/><line x1="381.54" y1="437.8" x2="381.54" y2="500.7" stroke="#ee9826" stroke-width="1.3"/><line x1="381.54" y1="500.7" x2="364.98" y2="563.8" stroke="url(#g6)" stroke-width="1.1"/><line x1="388.27" y1="59.5" x2="388.27" y2="122.65" stroke="#000" stroke-width="1.25" stroke-opacity="0.64"/><line x1="388.27" y1="122.65" x2="388.27" y2="185.65" stroke="#000" stroke-width="1.25" stroke-opacity="0.64"/><line x1="388.27" y1="185.65" x2="388.27" y2="248.6" stroke="#000" stroke-width="1.25" stroke-opacity="0.64"/><line x1="388.27" y1="248.6" x2="403.17" y2="311.75" stroke="url(#g7)" stroke-width="1.1"/><line x1="403.17" y1="311.75" x2="403.17" y2="374.75" stroke="#ee9826" stroke-width="1.3"/><line x1="403.17" y1="374.75" x2="403.17" y2="409.75" stroke="#ee9826" stroke-width="1.3"/><line x1="403.17" y1="409.75" x2="403.17" y2="437.8" stroke="#ee9826" stroke-width="1.3"/><line x1="403.17" y1="437.8" x2="403.17" y2="500.7" stroke="#ee9826" stroke-width="1.3"/><line x1="403.17" y1="500.7" x2="388.27" y2="563.8" stroke="url(#g8)" stroke-width="1.1"/><line x1="419.61" y1="59.5" x2="419.61" y2="122.65" stroke="#000" stroke-width="1.25" stroke-opacity="0.64"/><line x1="419.61" y1="122.65" x2="419.61" y2="185.65" stroke="#000" stroke-width="1.25" stroke-opacity="0.64"/><line x1="419.61" y1="185.65" x2="419.61" y2="248.6" stroke="#000" stroke-width="1.25" stroke-opacity="0.64"/><line x1="419.61" y1="248.6" x2="432.28" y2="311.75" stroke="url(#g9)" stroke-width="1.1"/><line x1="432.28" y1="311.75" x2="432.28" y2="374.75" stroke="#ee9826" stroke-width="1.3"/><line x1="432.28" y1="374.75" x2="432.28" y2="409.75" stroke="#ee9826" stroke-width="1.3"/><line x1="432.28" y1="409.75" x2="432.28" y2="437.8" stroke="#ee9826" stroke-width="1.3"/><line x1="432.28" y1="437.8" x2="432.28" y2="500.7" stroke="#ee9826" stroke-width="1.3"/><line x1="432.28" y1="500.7" x2="419.61" y2="563.8" stroke="url(#g10)" stroke-width="1.1"/><line x1="457.8" y1="59.5" x2="457.8" y2="122.65" stroke="#000" stroke-width="1.25" stroke-opacity="0.64"/><line x1="457.8" y1="122.65" x2="457.8" y2="185.65" stroke="#000" stroke-width="1.25" stroke-opacity="0.64"/><line x1="457.8" y1="185.65" x2="457.8" y2="248.6" stroke="#000" stroke-width="1.25" stroke-opacity="0.64"/><line x1="457.8" y1="248.6" x2="457.8" y2="311.75" stroke="#000" stroke-width="1.25" stroke-opacity="0.64"/><line x1="457.8" y1="311.75" x2="457.8" y2="374.75" stroke="#000" stroke-width="1.25" stroke-opacity="0.64"/><line x1="457.8" y1="374.75" x2="457.8" y2="409.75" stroke="#000" stroke-width="1.25" stroke-opacity="0.64"/><line x1="457.8" y1="409.75" x2="457.8" y2="437.8" stroke="#000" stroke-width="1.25" stroke-opacity="0.64"/><line x1="457.8" y1="437.8" x2="457.8" y2="500.7" stroke="#000" stroke-width="1.25" stroke-opacity="0.64"/><line x1="457.8" y1="500.7" x2="457.8" y2="563.8" stroke="#000" stroke-width="1.25" stroke-opacity="0.64"/><line x1="501.36" y1="59.5" x2="501.36" y2="122.65" stroke="#000" stroke-width="1.25" stroke-opacity="0.64"/><line x1="501.36" y1="122.65" x2="501.36" y2="185.65" stroke="#000" stroke-width="1.25" stroke-opacity="0.64"/><line x1="501.36" y1="185.65" x2="501.36" y2="248.6" stroke="#000" stroke-width="1.25" stroke-opacity="0.64"/><line x1="501.36" y1="248.6" x2="501.36" y2="311.75" stroke="#000" stroke-width="1.25" stroke-opacity="0.64"/><line x1="501.36" y1="311.75" x2="501.36" y2="374.75" stroke="#000" stroke-width="1.25" stroke-opacity="0.64"/><line x1="501.36" y1="374.75" x2="501.36" y2="409.75" stroke="#000" stroke-width="1.25" stroke-opacity="0.64"/><line x1="501.36" y1="409.75" x2="501.36" y2="437.8" stroke="#000" stroke-width="1.25" stroke-opacity="0.64"/><line x1="501.36" y1="437.8" x2="501.36" y2="500.7" stroke="#000" stroke-width="1.25" stroke-opacity="0.64"/><line x1="501.36" y1="500.7" x2="501.36" y2="563.8" stroke="#000" stroke-width="1.25" stroke-opacity="0.64"/><line x1="548.64" y1="59.5" x2="548.64" y2="122.65" stroke="#000" stroke-width="1.25" stroke-opacity="0.64"/><line x1="548.64" y1="122.65" x2="548.64" y2="185.65" stroke="#000" stroke-width="1.25" stroke-opacity="0.64"/><line x1="548.64" y1="185.65" x2="548.64" y2="248.6" stroke="#000" stroke-width="1.25" stroke-opacity="0.64"/><line x1="548.64" y1="248.6" x2="548.64" y2="311.75" stroke="#000" stroke-width="1.25" stroke-opacity="0.64"/><line x1="548.64" y1="311.75" x2="548.64" y2="374.75" stroke="#000" stroke-width="1.25" stroke-opacity="0.64"/><line x1="548.64" y1="374.75" x2="548.64" y2="409.75" stroke="#000" stroke-width="1.25" stroke-opacity="0.64"/><line x1="548.64" y1="409.75" x2="548.64" y2="437.8" stroke="#000" stroke-width="1.25" stroke-opacity="0.64"/><line x1="548.64" y1="437.8" x2="548.64" y2="500.7" stroke="#000" stroke-width="1.25" stroke-opacity="0.64"/><line x1="548.64" y1="500.7" x2="548.64" y2="563.8" stroke="#000" stroke-width="1.25" stroke-opacity="0.64"/><line x1="597.8" y1="59.5" x2="597.8" y2="122.65" stroke="#000" stroke-width="1.25" stroke-opacity="0.64"/><line x1="597.8" y1="122.65" x2="597.8" y2="185.65" stroke="#000" stroke-width="1.25" stroke-opacity="0.64"/><line x1="597.8" y1="185.65" x2="597.8" y2="248.6" stroke="#000" stroke-width="1.25" stroke-opacity="0.64"/><line x1="597.8" y1="248.6" x2="597.8" y2="311.75" stroke="#000" stroke-width="1.25" stroke-opacity="0.64"/><line x1="597.8" y1="311.75" x2="597.8" y2="374.75" stroke="#000" stroke-width="1.25" stroke-opacity="0.64"/><line x1="597.8" y1="374.75" x2="597.8" y2="409.75" stroke="#000" stroke-width="1.25" stroke-opacity="0.64"/><line x1="597.8" y1="409.75" x2="597.8" y2="437.8" stroke="#000" stroke-width="1.25" stroke-opacity="0.64"/><line x1="597.8" y1="437.8" x2="597.8" y2="500.7" stroke="#000" stroke-width="1.25" stroke-opacity="0.64"/><line x1="597.8" y1="500.7" x2="597.8" y2="563.8" stroke="#000" stroke-width="1.25" stroke-opacity="0.64"/><line x1="646.96" y1="59.5" x2="646.96" y2="122.65" stroke="#000" stroke-width="1.25" stroke-opacity="0.64"/><line x1="646.96" y1="122.65" x2="646.96" y2="185.65" stroke="#000" stroke-width="1.25" stroke-opacity="0.64"/><line x1="646.96" y1="185.65" x2="646.96" y2="248.6" stroke="#000" stroke-width="1.25" stroke-opacity="0.64"/><line x1="646.96" y1="248.6" x2="646.96" y2="311.75" stroke="#000" stroke-width="1.25" stroke-opacity="0.64"/><line x1="646.96" y1="311.75" x2="646.96" y2="374.75" stroke="#000" stroke-width="1.25" stroke-opacity="0.64"/><line x1="646.96" y1="374.75" x2="646.96" y2="409.75" stroke="#000" stroke-width="1.25" stroke-opacity="0.64"/><line x1="646.96" y1="409.75" x2="646.96" y2="437.8" stroke="#000" stroke-width="1.25" stroke-opacity="0.64"/><line x1="646.96" y1="437.8" x2="646.96" y2="500.7" stroke="#000" stroke-width="1.25" stroke-opacity="0.64"/><line x1="646.96" y1="500.7" x2="646.96" y2="563.8" stroke="#000" stroke-width="1.25" stroke-opacity="0.64"/><line x1="694.24" y1="59.5" x2="694.24" y2="122.65" stroke="#000" stroke-width="1.25" stroke-opacity="0.64"/><line x1="694.24" y1="122.65" x2="694.24" y2="185.65" stroke="#000" stroke-width="1.25" stroke-opacity="0.64"/><line x1="694.24" y1="185.65" x2="694.24" y2="248.6" stroke="#000" stroke-width="1.25" stroke-opacity="0.64"/><line x1="694.24" y1="248.6" x2="694.24" y2="311.75" stroke="#000" stroke-width="1.25" stroke-opacity="0.64"/><line x1="694.24" y1="311.75" x2="694.24" y2="374.75" stroke="#000" stroke-width="1.25" stroke-opacity="0.64"/><line x1="694.24" y1="374.75" x2="694.24" y2="409.75" stroke="#000" stroke-width="1.25" stroke-opacity="0.64"/><line x1="694.24" y1="409.75" x2="694.24" y2="437.8" stroke="#000" stroke-width="1.25" stroke-opacity="0.64"/><line x1="694.24" y1="437.8" x2="694.24" y2="500.7" stroke="#000" stroke-width="1.25" stroke-opacity="0.64"/><line x1="694.24" y1="500.7" x2="694.24" y2="563.8" stroke="#000" stroke-width="1.25" stroke-opacity="0.64"/><line x1="737.8" y1="59.5" x2="737.8" y2="122.65" stroke="#000" stroke-width="1.25" stroke-opacity="0.64"/><line x1="737.8" y1="122.65" x2="737.8" y2="185.65" stroke="#000" stroke-width="1.25" stroke-opacity="0.64"/><line x1="737.8" y1="185.65" x2="737.8" y2="248.6" stroke="#000" stroke-width="1.25" stroke-opacity="0.64"/><line x1="737.8" y1="248.6" x2="737.8" y2="311.75" stroke="#000" stroke-width="1.25" stroke-opacity="0.64"/><line x1="737.8" y1="311.75" x2="737.8" y2="374.75" stroke="#000" stroke-width="1.25" stroke-opacity="0.64"/><line x1="737.8" y1="374.75" x2="737.8" y2="409.75" stroke="#000" stroke-width="1.25" stroke-opacity="0.64"/><line x1="737.8" y1="409.75" x2="737.8" y2="437.8" stroke="#000" stroke-width="1.25" stroke-opacity="0.64"/><line x1="737.8" y1="437.8" x2="737.8" y2="500.7" stroke="#000" stroke-width="1.25" stroke-opacity="0.64"/><line x1="737.8" y1="500.7" x2="737.8" y2="563.8" stroke="#000" stroke-width="1.25" stroke-opacity="0.64"/><line x1="775.99" y1="59.5" x2="775.99" y2="122.65" stroke="#000" stroke-width="1.25" stroke-opacity="0.64"/><line x1="775.99" y1="122.65" x2="775.99" y2="185.65" stroke="#000" stroke-width="1.25" stroke-opacity="0.64"/><line x1="775.99" y1="185.65" x2="775.99" y2="248.6" stroke="#000" stroke-width="1.25" stroke-opacity="0.64"/><line x1="775.99" y1="248.6" x2="763.32" y2="311.75" stroke="url(#g11)" stroke-width="1.1"/><line x1="763.32" y1="311.75" x2="763.32" y2="374.75" stroke="#ee9826" stroke-width="1.3"/><line x1="763.32" y1="374.75" x2="763.32" y2="409.75" stroke="#ee9826" stroke-width="1.3"/><line x1="763.32" y1="409.75" x2="763.32" y2="437.8" stroke="#ee9826" stroke-width="1.3"/><line x1="763.32" y1="437.8" x2="763.32" y2="500.7" stroke="#ee9826" stroke-width="1.3"/><line x1="763.32" y1="500.7" x2="775.99" y2="563.8" stroke="url(#g12)" stroke-width="1.1"/><line x1="807.33" y1="59.5" x2="807.33" y2="122.65" stroke="#000" stroke-width="1.25" stroke-opacity="0.64"/><line x1="807.33" y1="122.65" x2="807.33" y2="185.65" stroke="#000" stroke-width="1.25" stroke-opacity="0.64"/><line x1="807.33" y1="185.65" x2="807.33" y2="248.6" stroke="#000" stroke-width="1.25" stroke-opacity="0.64"/><line x1="807.33" y1="248.6" x2="792.43" y2="311.75" stroke="url(#g13)" stroke-width="1.1"/><line x1="792.43" y1="311.75" x2="792.43" y2="374.75" stroke="#ee9826" stroke-width="1.3"/><line x1="792.43" y1="374.75" x2="792.43" y2="409.75" stroke="#ee9826" stroke-width="1.3"/><line x1="792.43" y1="409.75" x2="792.43" y2="437.8" stroke="#ee9826" stroke-width="1.3"/><line x1="792.43" y1="437.8" x2="792.43" y2="500.7" stroke="#ee9826" stroke-width="1.3"/><line x1="792.43" y1="500.7" x2="807.33" y2="563.8" stroke="url(#g14)" stroke-width="1.1"/><line x1="830.62" y1="59.5" x2="830.62" y2="122.65" stroke="#000" stroke-width="1.5" stroke-opacity="0.36"/><line x1="830.62" y1="122.65" x2="830.62" y2="185.65" stroke="#000" stroke-width="1.5" stroke-opacity="0.36"/><line x1="830.62" y1="185.65" x2="830.62" y2="248.6" stroke="#000" stroke-width="1.5" stroke-opacity="0.36"/><line x1="830.62" y1="248.6" x2="814.06" y2="311.75" stroke="url(#g15)" stroke-width="1.1"/><line x1="814.06" y1="311.75" x2="814.06" y2="374.75" stroke="#ee9826" stroke-width="1.3"/><line x1="814.06" y1="374.75" x2="814.06" y2="409.75" stroke="#ee9826" stroke-width="1.3"/><line x1="814.06" y1="409.75" x2="814.06" y2="437.8" stroke="#ee9826" stroke-width="1.3"/><line x1="814.06" y1="437.8" x2="814.06" y2="500.7" stroke="#ee9826" stroke-width="1.3"/><line x1="814.06" y1="500.7" x2="830.62" y2="563.8" stroke="url(#g16)" stroke-width="1.1"/><line x1="844.96" y1="59.5" x2="844.96" y2="122.65" stroke="#000" stroke-width="1.2" stroke-opacity="0.33"/><line x1="844.96" y1="122.65" x2="844.96" y2="185.65" stroke="#000" stroke-width="1.2" stroke-opacity="0.33"/><line x1="844.96" y1="185.65" x2="844.96" y2="248.6" stroke="#000" stroke-width="1.2" stroke-opacity="0.33"/><line x1="844.96" y1="248.6" x2="827.38" y2="311.75" stroke="url(#g17)" stroke-width="1.1"/><line x1="827.38" y1="311.75" x2="827.38" y2="374.75" stroke="#ee9826" stroke-width="1.3"/><line x1="827.38" y1="374.75" x2="827.38" y2="409.75" stroke="#ee9826" stroke-width="1.3"/><line x1="827.38" y1="409.75" x2="827.38" y2="437.8" stroke="#ee9826" stroke-width="1.3"/><line x1="827.38" y1="437.8" x2="827.38" y2="500.7" stroke="#ee9826" stroke-width="1.3"/><line x1="827.38" y1="500.7" x2="844.96" y2="563.8" stroke="url(#g18)" stroke-width="1.1"/><line x1="849.8" y1="59.5" x2="849.8" y2="122.65" stroke="#000" stroke-width="1.0" stroke-opacity="0.27"/><line x1="849.8" y1="122.65" x2="849.8" y2="185.65" stroke="#000" stroke-width="1.0" stroke-opacity="0.27"/><line x1="849.8" y1="185.65" x2="849.8" y2="248.6" stroke="#000" stroke-width="1.0" stroke-opacity="0.27"/><line x1="849.8" y1="248.6" x2="831.88" y2="311.75" stroke="url(#g19)" stroke-width="1.1"/><line x1="831.88" y1="311.75" x2="831.88" y2="374.75" stroke="#ee9826" stroke-width="1.3"/><line x1="831.88" y1="374.75" x2="831.88" y2="409.75" stroke="#ee9826" stroke-width="1.3"/><line x1="831.88" y1="409.75" x2="831.88" y2="437.8" stroke="#ee9826" stroke-width="1.3"/><line x1="831.88" y1="437.8" x2="831.88" y2="500.7" stroke="#ee9826" stroke-width="1.3"/><line x1="831.88" y1="500.7" x2="849.8" y2="563.8" stroke="url(#g20)" stroke-width="1.1"/><line x1="345.8" y1="59.5" x2="350.64" y2="59.5" stroke="#000" stroke-width="1.4" stroke-opacity="0.92"/><line x1="350.64" y1="59.5" x2="364.98" y2="59.5" stroke="#000" stroke-width="1.4" stroke-opacity="0.92"/><line x1="364.98" y1="59.5" x2="388.27" y2="59.5" stroke="#000" stroke-width="1.4" stroke-opacity="0.92"/><line x1="388.27" y1="59.5" x2="419.61" y2="59.5" stroke="#000" stroke-width="1.4" stroke-opacity="0.92"/><line x1="419.61" y1="59.5" x2="457.8" y2="59.5" stroke="#000" stroke-width="1.4" stroke-opacity="0.92"/><line x1="457.8" y1="59.5" x2="501.36" y2="59.5" stroke="#000" stroke-width="1.4" stroke-opacity="0.92"/><line x1="501.36" y1="59.5" x2="548.64" y2="59.5" stroke="#000" stroke-width="1.4" stroke-opacity="0.92"/><line x1="548.64" y1="59.5" x2="597.8" y2="59.5" stroke="#000" stroke-width="1.4" stroke-opacity="0.92"/><line x1="597.8" y1="59.5" x2="646.96" y2="59.5" stroke="#000" stroke-width="1.4" stroke-opacity="0.92"/><line x1="646.96" y1="59.5" x2="694.24" y2="59.5" stroke="#000" stroke-width="1.4" stroke-opacity="0.92"/><line x1="694.24" y1="59.5" x2="737.8" y2="59.5" stroke="#000" stroke-width="1.4" stroke-opacity="0.92"/><line x1="737.8" y1="59.5" x2="775.99" y2="59.5" stroke="#000" stroke-width="1.4" stroke-opacity="0.92"/><line x1="775.99" y1="59.5" x2="807.33" y2="59.5" stroke="#000" stroke-width="1.4" stroke-opacity="0.92"/><line x1="807.33" y1="59.5" x2="830.62" y2="59.5" stroke="#000" stroke-width="1.4" stroke-opacity="0.92"/><line x1="830.62" y1="59.5" x2="844.96" y2="59.5" stroke="#000" stroke-width="1.4" stroke-opacity="0.92"/><line x1="844.96" y1="59.5" x2="849.8" y2="59.5" stroke="#000" stroke-width="1.4" stroke-opacity="0.92"/><line x1="345.8" y1="122.65" x2="350.64" y2="122.65" stroke="#000" stroke-width="1.5" stroke-opacity="0.46"/><line x1="350.64" y1="122.65" x2="364.98" y2="122.65" stroke="#000" stroke-width="1.5" stroke-opacity="0.46"/><line x1="364.98" y1="122.65" x2="388.27" y2="122.65" stroke="#000" stroke-width="1.5" stroke-opacity="0.46"/><line x1="388.27" y1="122.65" x2="419.61" y2="122.65" stroke="#000" stroke-width="1.5" stroke-opacity="0.46"/><line x1="419.61" y1="122.65" x2="457.8" y2="122.65" stroke="#000" stroke-width="1.5" stroke-opacity="0.46"/><line x1="457.8" y1="122.65" x2="501.36" y2="122.65" stroke="#000" stroke-width="1.5" stroke-opacity="0.46"/><line x1="501.36" y1="122.65" x2="548.64" y2="122.65" stroke="#000" stroke-width="1.5" stroke-opacity="0.46"/><line x1="548.64" y1="122.65" x2="597.8" y2="122.65" stroke="#000" stroke-width="1.5" stroke-opacity="0.46"/><line x1="597.8" y1="122.65" x2="646.96" y2="122.65" stroke="#000" stroke-width="1.5" stroke-opacity="0.46"/><line x1="646.96" y1="122.65" x2="694.24" y2="122.65" stroke="#000" stroke-width="1.5" stroke-opacity="0.46"/><line x1="694.24" y1="122.65" x2="737.8" y2="122.65" stroke="#000" stroke-width="1.5" stroke-opacity="0.46"/><line x1="737.8" y1="122.65" x2="775.99" y2="122.65" stroke="#000" stroke-width="1.5" stroke-opacity="0.46"/><line x1="775.99" y1="122.65" x2="807.33" y2="122.65" stroke="#000" stroke-width="1.5" stroke-opacity="0.46"/><line x1="807.33" y1="122.65" x2="830.62" y2="122.65" stroke="#000" stroke-width="1.5" stroke-opacity="0.46"/><line x1="830.62" y1="122.65" x2="844.96" y2="122.65" stroke="#000" stroke-width="1.5" stroke-opacity="0.46"/><line x1="844.96" y1="122.65" x2="849.8" y2="122.65" stroke="#000" stroke-width="1.5" stroke-opacity="0.46"/><line x1="345.8" y1="185.65" x2="350.64" y2="185.65" stroke="#000" stroke-width="1.5" stroke-opacity="0.46"/><line x1="350.64" y1="185.65" x2="364.98" y2="185.65" stroke="#000" stroke-width="1.5" stroke-opacity="0.46"/><line x1="364.98" y1="185.65" x2="388.27" y2="185.65" stroke="#000" stroke-width="1.5" stroke-opacity="0.46"/><line x1="388.27" y1="185.65" x2="419.61" y2="185.65" stroke="#000" stroke-width="1.5" stroke-opacity="0.46"/><line x1="419.61" y1="185.65" x2="457.8" y2="185.65" stroke="#000" stroke-width="1.5" stroke-opacity="0.46"/><line x1="457.8" y1="185.65" x2="501.36" y2="185.65" stroke="#000" stroke-width="1.5" stroke-opacity="0.46"/><line x1="501.36" y1="185.65" x2="548.64" y2="185.65" stroke="#000" stroke-width="1.5" stroke-opacity="0.46"/><line x1="548.64" y1="185.65" x2="597.8" y2="185.65" stroke="#000" stroke-width="1.5" stroke-opacity="0.46"/><line x1="597.8" y1="185.65" x2="646.96" y2="185.65" stroke="#000" stroke-width="1.5" stroke-opacity="0.46"/><line x1="646.96" y1="185.65" x2="694.24" y2="185.65" stroke="#000" stroke-width="1.5" stroke-opacity="0.46"/><line x1="694.24" y1="185.65" x2="737.8" y2="185.65" stroke="#000" stroke-width="1.5" stroke-opacity="0.46"/><line x1="737.8" y1="185.65" x2="775.99" y2="185.65" stroke="#000" stroke-width="1.5" stroke-opacity="0.46"/><line x1="775.99" y1="185.65" x2="807.33" y2="185.65" stroke="#000" stroke-width="1.5" stroke-opacity="0.46"/><line x1="807.33" y1="185.65" x2="830.62" y2="185.65" stroke="#000" stroke-width="1.5" stroke-opacity="0.46"/><line x1="830.62" y1="185.65" x2="844.96" y2="185.65" stroke="#000" stroke-width="1.5" stroke-opacity="0.46"/><line x1="844.96" y1="185.65" x2="849.8" y2="185.65" stroke="#000" stroke-width="1.5" stroke-opacity="0.46"/><line x1="345.8" y1="248.6" x2="350.64" y2="248.6" stroke="#000" stroke-width="1.5" stroke-opacity="0.46"/><line x1="350.64" y1="248.6" x2="364.98" y2="248.6" stroke="#000" stroke-width="1.5" stroke-opacity="0.46"/><line x1="364.98" y1="248.6" x2="388.27" y2="248.6" stroke="#000" stroke-width="1.5" stroke-opacity="0.46"/><line x1="388.27" y1="248.6" x2="419.61" y2="248.6" stroke="#000" stroke-width="1.5" stroke-opacity="0.46"/><line x1="419.61" y1="248.6" x2="457.8" y2="248.6" stroke="#000" stroke-width="1.5" stroke-opacity="0.46"/><line x1="457.8" y1="248.6" x2="501.36" y2="248.6" stroke="#000" stroke-width="1.5" stroke-opacity="0.46"/><line x1="501.36" y1="248.6" x2="548.64" y2="248.6" stroke="#000" stroke-width="1.5" stroke-opacity="0.46"/><line x1="548.64" y1="248.6" x2="597.8" y2="248.6" stroke="#000" stroke-width="1.5" stroke-opacity="0.46"/><line x1="597.8" y1="248.6" x2="646.96" y2="248.6" stroke="#000" stroke-width="1.5" stroke-opacity="0.46"/><line x1="646.96" y1="248.6" x2="694.24" y2="248.6" stroke="#000" stroke-width="1.5" stroke-opacity="0.46"/><line x1="694.24" y1="248.6" x2="737.8" y2="248.6" stroke="#000" stroke-width="1.5" stroke-opacity="0.46"/><line x1="737.8" y1="248.6" x2="775.99" y2="248.6" stroke="#000" stroke-width="1.5" stroke-opacity="0.46"/><line x1="775.99" y1="248.6" x2="807.33" y2="248.6" stroke="#000" stroke-width="1.5" stroke-opacity="0.46"/><line x1="807.33" y1="248.6" x2="830.62" y2="248.6" stroke="#000" stroke-width="1.5" stroke-opacity="0.46"/><line x1="830.62" y1="248.6" x2="844.96" y2="248.6" stroke="#000" stroke-width="1.5" stroke-opacity="0.46"/><line x1="844.96" y1="248.6" x2="849.8" y2="248.6" stroke="#000" stroke-width="1.5" stroke-opacity="0.46"/><line x1="363.72" y1="311.75" x2="368.22" y2="311.75" stroke="#ee9826" stroke-width="1.3"/><line x1="368.22" y1="311.75" x2="381.54" y2="311.75" stroke="#ee9826" stroke-width="1.3"/><line x1="381.54" y1="311.75" x2="403.17" y2="311.75" stroke="#ee9826" stroke-width="1.3"/><line x1="403.17" y1="311.75" x2="432.28" y2="311.75" stroke="#ee9826" stroke-width="1.3"/><line x1="432.28" y1="311.75" x2="457.8" y2="311.75" stroke="url(#g21)" stroke-width="1.1"/><line x1="457.8" y1="311.75" x2="501.36" y2="311.75" stroke="#000" stroke-width="1.5" stroke-opacity="0.46"/><line x1="501.36" y1="311.75" x2="548.64" y2="311.75" stroke="#000" stroke-width="1.5" stroke-opacity="0.46"/><line x1="548.64" y1="311.75" x2="597.8" y2="311.75" stroke="#000" stroke-width="1.5" stroke-opacity="0.46"/><line x1="597.8" y1="311.75" x2="646.96" y2="311.75" stroke="#000" stroke-width="1.5" stroke-opacity="0.46"/><line x1="646.96" y1="311.75" x2="694.24" y2="311.75" stroke="#000" stroke-width="1.5" stroke-opacity="0.46"/><line x1="694.24" y1="311.75" x2="737.8" y2="311.75" stroke="#000" stroke-width="1.5" stroke-opacity="0.46"/><line x1="737.8" y1="311.75" x2="763.32" y2="311.75" stroke="url(#g22)" stroke-width="1.1"/><line x1="763.32" y1="311.75" x2="792.43" y2="311.75" stroke="#ee9826" stroke-width="1.3"/><line x1="792.43" y1="311.75" x2="814.06" y2="311.75" stroke="#ee9826" stroke-width="1.3"/><line x1="814.06" y1="311.75" x2="827.38" y2="311.75" stroke="#ee9826" stroke-width="1.3"/><line x1="827.38" y1="311.75" x2="831.88" y2="311.75" stroke="#ee9826" stroke-width="1.3"/><line x1="363.72" y1="374.75" x2="368.22" y2="374.75" stroke="#ee9826" stroke-width="1.3"/><line x1="368.22" y1="374.75" x2="381.54" y2="374.75" stroke="#ee9826" stroke-width="1.3"/><line x1="381.54" y1="374.75" x2="403.17" y2="374.75" stroke="#ee9826" stroke-width="1.3"/><line x1="403.17" y1="374.75" x2="432.28" y2="374.75" stroke="#ee9826" stroke-width="1.3"/><line x1="432.28" y1="374.75" x2="457.8" y2="374.75" stroke="url(#g23)" stroke-width="1.1"/><line x1="457.8" y1="374.75" x2="501.36" y2="374.75" stroke="#000" stroke-width="1.5" stroke-opacity="0.46"/><line x1="501.36" y1="374.75" x2="548.64" y2="374.75" stroke="#000" stroke-width="1.5" stroke-opacity="0.46"/><line x1="548.64" y1="374.75" x2="597.8" y2="374.75" stroke="#000" stroke-width="1.5" stroke-opacity="0.46"/><line x1="597.8" y1="374.75" x2="646.96" y2="374.75" stroke="#000" stroke-width="1.5" stroke-opacity="0.46"/><line x1="646.96" y1="374.75" x2="694.24" y2="374.75" stroke="#000" stroke-width="1.5" stroke-opacity="0.46"/><line x1="694.24" y1="374.75" x2="737.8" y2="374.75" stroke="#000" stroke-width="1.5" stroke-opacity="0.46"/><line x1="737.8" y1="374.75" x2="763.32" y2="374.75" stroke="url(#g24)" stroke-width="1.1"/><line x1="763.32" y1="374.75" x2="792.43" y2="374.75" stroke="#ee9826" stroke-width="1.3"/><line x1="792.43" y1="374.75" x2="814.06" y2="374.75" stroke="#ee9826" stroke-width="1.3"/><line x1="814.06" y1="374.75" x2="827.38" y2="374.75" stroke="#ee9826" stroke-width="1.3"/><line x1="827.38" y1="374.75" x2="831.88" y2="374.75" stroke="#ee9826" stroke-width="1.3"/><line x1="363.72" y1="409.75" x2="368.22" y2="409.75" stroke="#ee9826" stroke-width="1.3"/><line x1="368.22" y1="409.75" x2="381.54" y2="409.75" stroke="#ee9826" stroke-width="1.3"/><line x1="381.54" y1="409.75" x2="403.17" y2="409.75" stroke="#ee9826" stroke-width="1.3"/><line x1="403.17" y1="409.75" x2="432.28" y2="409.75" stroke="#ee9826" stroke-width="1.3"/><line x1="432.28" y1="409.75" x2="457.8" y2="409.75" stroke="url(#g25)" stroke-width="1.1"/><line x1="457.8" y1="409.75" x2="501.36" y2="409.75" stroke="#000" stroke-width="1.5" stroke-opacity="0.46"/><line x1="501.36" y1="409.75" x2="548.64" y2="409.75" stroke="#000" stroke-width="1.5" stroke-opacity="0.46"/><line x1="548.64" y1="409.75" x2="597.8" y2="409.75" stroke="#000" stroke-width="1.5" stroke-opacity="0.46"/><line x1="597.8" y1="409.75" x2="646.96" y2="409.75" stroke="#000" stroke-width="1.5" stroke-opacity="0.46"/><line x1="646.96" y1="409.75" x2="694.24" y2="409.75" stroke="#000" stroke-width="1.5" stroke-opacity="0.46"/><line x1="694.24" y1="409.75" x2="737.8" y2="409.75" stroke="#000" stroke-width="1.5" stroke-opacity="0.46"/><line x1="737.8" y1="409.75" x2="763.32" y2="409.75" stroke="url(#g26)" stroke-width="1.1"/><line x1="763.32" y1="409.75" x2="792.43" y2="409.75" stroke="#ee9826" stroke-width="1.3"/><line x1="792.43" y1="409.75" x2="814.06" y2="409.75" stroke="#ee9826" stroke-width="1.3"/><line x1="814.06" y1="409.75" x2="827.38" y2="409.75" stroke="#ee9826" stroke-width="1.3"/><line x1="827.38" y1="409.75" x2="831.88" y2="409.75" stroke="#ee9826" stroke-width="1.3"/><line x1="363.72" y1="437.8" x2="368.22" y2="437.8" stroke="#ee9826" stroke-width="1.3"/><line x1="368.22" y1="437.8" x2="381.54" y2="437.8" stroke="#ee9826" stroke-width="1.3"/><line x1="381.54" y1="437.8" x2="403.17" y2="437.8" stroke="#ee9826" stroke-width="1.3"/><line x1="403.17" y1="437.8" x2="432.28" y2="437.8" stroke="#ee9826" stroke-width="1.3"/><line x1="432.28" y1="437.8" x2="457.8" y2="437.8" stroke="url(#g27)" stroke-width="1.1"/><line x1="457.8" y1="437.8" x2="501.36" y2="437.8" stroke="#000" stroke-width="1.5" stroke-opacity="0.46"/><line x1="501.36" y1="437.8" x2="548.64" y2="437.8" stroke="#000" stroke-width="1.5" stroke-opacity="0.46"/><line x1="548.64" y1="437.8" x2="597.8" y2="437.8" stroke="#000" stroke-width="1.5" stroke-opacity="0.46"/><line x1="597.8" y1="437.8" x2="646.96" y2="437.8" stroke="#000" stroke-width="1.5" stroke-opacity="0.46"/><line x1="646.96" y1="437.8" x2="694.24" y2="437.8" stroke="#000" stroke-width="1.5" stroke-opacity="0.46"/><line x1="694.24" y1="437.8" x2="737.8" y2="437.8" stroke="#000" stroke-width="1.5" stroke-opacity="0.46"/><line x1="737.8" y1="437.8" x2="763.32" y2="437.8" stroke="url(#g28)" stroke-width="1.1"/><line x1="763.32" y1="437.8" x2="792.43" y2="437.8" stroke="#ee9826" stroke-width="1.3"/><line x1="792.43" y1="437.8" x2="814.06" y2="437.8" stroke="#ee9826" stroke-width="1.3"/><line x1="814.06" y1="437.8" x2="827.38" y2="437.8" stroke="#ee9826" stroke-width="1.3"/><line x1="827.38" y1="437.8" x2="831.88" y2="437.8" stroke="#ee9826" stroke-width="1.3"/><line x1="363.72" y1="500.7" x2="368.22" y2="500.7" stroke="#ee9826" stroke-width="1.3"/><line x1="368.22" y1="500.7" x2="381.54" y2="500.7" stroke="#ee9826" stroke-width="1.3"/><line x1="381.54" y1="500.7" x2="403.17" y2="500.7" stroke="#ee9826" stroke-width="1.3"/><line x1="403.17" y1="500.7" x2="432.28" y2="500.7" stroke="#ee9826" stroke-width="1.3"/><line x1="432.28" y1="500.7" x2="457.8" y2="500.7" stroke="url(#g29)" stroke-width="1.1"/><line x1="457.8" y1="500.7" x2="501.36" y2="500.7" stroke="#000" stroke-width="1.5" stroke-opacity="0.46"/><line x1="501.36" y1="500.7" x2="548.64" y2="500.7" stroke="#000" stroke-width="1.5" stroke-opacity="0.46"/><line x1="548.64" y1="500.7" x2="597.8" y2="500.7" stroke="#000" stroke-width="1.5" stroke-opacity="0.46"/><line x1="597.8" y1="500.7" x2="646.96" y2="500.7" stroke="#000" stroke-width="1.5" stroke-opacity="0.46"/><line x1="646.96" y1="500.7" x2="694.24" y2="500.7" stroke="#000" stroke-width="1.5" stroke-opacity="0.46"/><line x1="694.24" y1="500.7" x2="737.8" y2="500.7" stroke="#000" stroke-width="1.5" stroke-opacity="0.46"/><line x1="737.8" y1="500.7" x2="763.32" y2="500.7" stroke="url(#g30)" stroke-width="1.1"/><line x1="763.32" y1="500.7" x2="792.43" y2="500.7" stroke="#ee9826" stroke-width="1.3"/><line x1="792.43" y1="500.7" x2="814.06" y2="500.7" stroke="#ee9826" stroke-width="1.3"/><line x1="814.06" y1="500.7" x2="827.38" y2="500.7" stroke="#ee9826" stroke-width="1.3"/><line x1="827.38" y1="500.7" x2="831.88" y2="500.7" stroke="#ee9826" stroke-width="1.3"/><line x1="345.8" y1="563.8" x2="350.64" y2="563.8" stroke="#000" stroke-width="1.3" stroke-opacity="0.55"/><line x1="350.64" y1="563.8" x2="364.98" y2="563.8" stroke="#000" stroke-width="1.3" stroke-opacity="0.55"/><line x1="364.98" y1="563.8" x2="388.27" y2="563.8" stroke="#000" stroke-width="1.3" stroke-opacity="0.55"/><line x1="388.27" y1="563.8" x2="419.61" y2="563.8" stroke="#000" stroke-width="1.3" stroke-opacity="0.55"/><line x1="419.61" y1="563.8" x2="457.8" y2="563.8" stroke="#000" stroke-width="1.3" stroke-opacity="0.55"/><line x1="457.8" y1="563.8" x2="501.36" y2="563.8" stroke="#000" stroke-width="1.3" stroke-opacity="0.55"/><line x1="501.36" y1="563.8" x2="548.64" y2="563.8" stroke="#000" stroke-width="1.3" stroke-opacity="0.55"/><line x1="548.64" y1="563.8" x2="597.8" y2="563.8" stroke="#000" stroke-width="1.3" stroke-opacity="0.55"/><line x1="597.8" y1="563.8" x2="646.96" y2="563.8" stroke="#000" stroke-width="1.3" stroke-opacity="0.55"/><line x1="646.96" y1="563.8" x2="694.24" y2="563.8" stroke="#000" stroke-width="1.3" stroke-opacity="0.55"/><line x1="694.24" y1="563.8" x2="737.8" y2="563.8" stroke="#000" stroke-width="1.3" stroke-opacity="0.55"/><line x1="737.8" y1="563.8" x2="775.99" y2="563.8" stroke="#000" stroke-width="1.3" stroke-opacity="0.55"/><line x1="775.99" y1="563.8" x2="807.33" y2="563.8" stroke="#000" stroke-width="1.3" stroke-opacity="0.55"/><line x1="807.33" y1="563.8" x2="830.62" y2="563.8" stroke="#000" stroke-width="1.3" stroke-opacity="0.55"/><line x1="830.62" y1="563.8" x2="844.96" y2="563.8" stroke="#000" stroke-width="1.3" stroke-opacity="0.55"/><line x1="844.96" y1="563.8" x2="849.8" y2="563.8" stroke="#000" stroke-width="1.3" stroke-opacity="0.55"/></g>
<line x1="362.47" y1="311.75" x2="362.47" y2="500.7" stroke="#0c3048" stroke-width="0.9" stroke-opacity="0.75"/>
<line x1="433.48" y1="311.75" x2="433.48" y2="500.7" stroke="#0c3048" stroke-width="0.9" stroke-opacity="0.4"/>
<line x1="762.12" y1="311.75" x2="762.12" y2="500.7" stroke="#0c3048" stroke-width="0.9" stroke-opacity="0.5"/>
<line x1="833.13" y1="311.75" x2="833.13" y2="500.7" stroke="#0c3048" stroke-width="0.9" stroke-opacity="0.75"/>
<g fill="#000"><circle cx="345.8" cy="59.5" r="1.65"/><circle cx="345.8" cy="122.65" r="1.65"/><circle cx="345.8" cy="185.65" r="1.65"/><circle cx="345.8" cy="248.6" r="1.65"/><circle cx="345.8" cy="563.8" r="1.65"/><circle cx="350.64" cy="59.5" r="1.65"/><circle cx="350.64" cy="122.65" r="1.65"/><circle cx="350.64" cy="185.65" r="1.65"/><circle cx="350.64" cy="248.6" r="1.65"/><circle cx="350.64" cy="563.8" r="1.65"/><circle cx="364.98" cy="59.5" r="1.65"/><circle cx="364.98" cy="122.65" r="1.65"/><circle cx="364.98" cy="185.65" r="1.65"/><circle cx="364.98" cy="248.6" r="1.65"/><circle cx="364.98" cy="563.8" r="1.65"/><circle cx="388.27" cy="59.5" r="1.65"/><circle cx="388.27" cy="122.65" r="1.65"/><circle cx="388.27" cy="185.65" r="1.65"/><circle cx="388.27" cy="248.6" r="1.65"/><circle cx="388.27" cy="563.8" r="1.65"/><circle cx="419.61" cy="59.5" r="1.65"/><circle cx="419.61" cy="122.65" r="1.65"/><circle cx="419.61" cy="185.65" r="1.65"/><circle cx="419.61" cy="248.6" r="1.65"/><circle cx="419.61" cy="563.8" r="1.65"/><circle cx="457.8" cy="59.5" r="1.65"/><circle cx="457.8" cy="122.65" r="1.65"/><circle cx="457.8" cy="185.65" r="1.65"/><circle cx="457.8" cy="248.6" r="1.65"/><circle cx="457.8" cy="311.75" r="1.65"/><circle cx="457.8" cy="374.75" r="1.65"/><circle cx="457.8" cy="409.75" r="1.65"/><circle cx="457.8" cy="437.8" r="1.65"/><circle cx="457.8" cy="500.7" r="1.65"/><circle cx="457.8" cy="563.8" r="1.65"/><circle cx="501.36" cy="59.5" r="1.65"/><circle cx="501.36" cy="122.65" r="1.65"/><circle cx="501.36" cy="185.65" r="1.65"/><circle cx="501.36" cy="248.6" r="1.65"/><circle cx="501.36" cy="311.75" r="1.65"/><circle cx="501.36" cy="374.75" r="1.65"/><circle cx="501.36" cy="409.75" r="1.65"/><circle cx="501.36" cy="437.8" r="1.65"/><circle cx="501.36" cy="500.7" r="1.65"/><circle cx="501.36" cy="563.8" r="1.65"/><circle cx="548.64" cy="59.5" r="1.65"/><circle cx="548.64" cy="122.65" r="1.65"/><circle cx="548.64" cy="185.65" r="1.65"/><circle cx="548.64" cy="248.6" r="1.65"/><circle cx="548.64" cy="311.75" r="1.65"/><circle cx="548.64" cy="374.75" r="1.65"/><circle cx="548.64" cy="409.75" r="1.65"/><circle cx="548.64" cy="437.8" r="1.65"/><circle cx="548.64" cy="500.7" r="1.65"/><circle cx="548.64" cy="563.8" r="1.65"/><circle cx="597.8" cy="59.5" r="1.65"/><circle cx="597.8" cy="122.65" r="1.65"/><circle cx="597.8" cy="185.65" r="1.65"/><circle cx="597.8" cy="248.6" r="1.65"/><circle cx="597.8" cy="311.75" r="1.65"/><circle cx="597.8" cy="374.75" r="1.65"/><circle cx="597.8" cy="409.75" r="1.65"/><circle cx="597.8" cy="437.8" r="1.65"/><circle cx="597.8" cy="500.7" r="1.65"/><circle cx="597.8" cy="563.8" r="1.65"/><circle cx="646.96" cy="59.5" r="1.65"/><circle cx="646.96" cy="122.65" r="1.65"/><circle cx="646.96" cy="185.65" r="1.65"/><circle cx="646.96" cy="248.6" r="1.65"/><circle cx="646.96" cy="311.75" r="1.65"/><circle cx="646.96" cy="374.75" r="1.65"/><circle cx="646.96" cy="409.75" r="1.65"/><circle cx="646.96" cy="437.8" r="1.65"/><circle cx="646.96" cy="500.7" r="1.65"/><circle cx="646.96" cy="563.8" r="1.65"/><circle cx="694.24" cy="59.5" r="1.65"/><circle cx="694.24" cy="122.65" r="1.65"/><circle cx="694.24" cy="185.65" r="1.65"/><circle cx="694.24" cy="248.6" r="1.65"/><circle cx="694.24" cy="311.75" r="1.65"/><circle cx="694.24" cy="374.75" r="1.65"/><circle cx="694.24" cy="409.75" r="1.65"/><circle cx="694.24" cy="437.8" r="1.65"/><circle cx="694.24" cy="500.7" r="1.65"/><circle cx="694.24" cy="563.8" r="1.65"/><circle cx="737.8" cy="59.5" r="1.65"/><circle cx="737.8" cy="122.65" r="1.65"/><circle cx="737.8" cy="185.65" r="1.65"/><circle cx="737.8" cy="248.6" r="1.65"/><circle cx="737.8" cy="311.75" r="1.65"/><circle cx="737.8" cy="374.75" r="1.65"/><circle cx="737.8" cy="409.75" r="1.65"/><circle cx="737.8" cy="437.8" r="1.65"/><circle cx="737.8" cy="500.7" r="1.65"/><circle cx="737.8" cy="563.8" r="1.65"/><circle cx="775.99" cy="59.5" r="1.65"/><circle cx="775.99" cy="122.65" r="1.65"/><circle cx="775.99" cy="185.65" r="1.65"/><circle cx="775.99" cy="248.6" r="1.65"/><circle cx="775.99" cy="563.8" r="1.65"/><circle cx="807.33" cy="59.5" r="1.65"/><circle cx="807.33" cy="122.65" r="1.65"/><circle cx="807.33" cy="185.65" r="1.65"/><circle cx="807.33" cy="248.6" r="1.65"/><circle cx="807.33" cy="563.8" r="1.65"/><circle cx="830.62" cy="59.5" r="1.65"/><circle cx="830.62" cy="122.65" r="1.65"/><circle cx="830.62" cy="185.65" r="1.65"/><circle cx="830.62" cy="248.6" r="1.65"/><circle cx="830.62" cy="563.8" r="1.65"/><circle cx="844.96" cy="59.5" r="1.65"/><circle cx="844.96" cy="122.65" r="1.65"/><circle cx="844.96" cy="185.65" r="1.65"/><circle cx="844.96" cy="248.6" r="1.65"/><circle cx="844.96" cy="563.8" r="1.65"/><circle cx="849.8" cy="59.5" r="1.65"/><circle cx="849.8" cy="122.65" r="1.65"/><circle cx="849.8" cy="185.65" r="1.65"/><circle cx="849.8" cy="248.6" r="1.65"/><circle cx="849.8" cy="563.8" r="1.65"/></g>
<g fill="#ff7a00"><circle cx="363.72" cy="311.75" r="1.7"/><circle cx="363.72" cy="374.75" r="1.7"/><circle cx="363.72" cy="409.75" r="1.7"/><circle cx="363.72" cy="437.8" r="1.7"/><circle cx="363.72" cy="500.7" r="1.7"/><circle cx="368.22" cy="311.75" r="1.7"/><circle cx="368.22" cy="374.75" r="1.7"/><circle cx="368.22" cy="409.75" r="1.7"/><circle cx="368.22" cy="437.8" r="1.7"/><circle cx="368.22" cy="500.7" r="1.7"/><circle cx="381.54" cy="311.75" r="1.7"/><circle cx="381.54" cy="374.75" r="1.7"/><circle cx="381.54" cy="409.75" r="1.7"/><circle cx="381.54" cy="437.8" r="1.7"/><circle cx="381.54" cy="500.7" r="1.7"/><circle cx="403.17" cy="311.75" r="1.7"/><circle cx="403.17" cy="374.75" r="1.7"/><circle cx="403.17" cy="409.75" r="1.7"/><circle cx="403.17" cy="437.8" r="1.7"/><circle cx="403.17" cy="500.7" r="1.7"/><circle cx="432.28" cy="311.75" r="1.7"/><circle cx="432.28" cy="374.75" r="1.7"/><circle cx="432.28" cy="409.75" r="1.7"/><circle cx="432.28" cy="437.8" r="1.7"/><circle cx="432.28" cy="500.7" r="1.7"/><circle cx="763.32" cy="311.75" r="1.7"/><circle cx="763.32" cy="374.75" r="1.7"/><circle cx="763.32" cy="409.75" r="1.7"/><circle cx="763.32" cy="437.8" r="1.7"/><circle cx="763.32" cy="500.7" r="1.7"/><circle cx="792.43" cy="311.75" r="1.7"/><circle cx="792.43" cy="374.75" r="1.7"/><circle cx="792.43" cy="409.75" r="1.7"/><circle cx="792.43" cy="437.8" r="1.7"/><circle cx="792.43" cy="500.7" r="1.7"/><circle cx="814.06" cy="311.75" r="1.7"/><circle cx="814.06" cy="374.75" r="1.7"/><circle cx="814.06" cy="409.75" r="1.7"/><circle cx="814.06" cy="437.8" r="1.7"/><circle cx="814.06" cy="500.7" r="1.7"/><circle cx="827.38" cy="311.75" r="1.7"/><circle cx="827.38" cy="374.75" r="1.7"/><circle cx="827.38" cy="409.75" r="1.7"/><circle cx="827.38" cy="437.8" r="1.7"/><circle cx="827.38" cy="500.7" r="1.7"/><circle cx="831.88" cy="311.75" r="1.7"/><circle cx="831.88" cy="374.75" r="1.7"/><circle cx="831.88" cy="409.75" r="1.7"/><circle cx="831.88" cy="437.8" r="1.7"/><circle cx="831.88" cy="500.7" r="1.7"/></g>
<circle cx="597.7" cy="311.8" r="2.2" fill="#f5a530" stroke="#8a5514" stroke-width="0.5"/>
<line x1="0" y1="407.1" x2="1217" y2="407.1" stroke="#9ac564" stroke-width="2.2"/>
<line x1="597.4" y1="406.5" x2="813" y2="419.2" stroke="#2a1a10" stroke-width="1.6" stroke-dasharray="3.4 3.23" stroke-opacity="0.6" transform="translate(0.5,0.6)"/>
<line x1="597.4" y1="406.5" x2="813" y2="419.2" stroke="#fff" stroke-width="1.3" stroke-dasharray="3.4 3.23"/>
<g transform="translate(0.5,0.7) rotate(3.5 814 419.5)" stroke="#5a1505" stroke-width="2.6" fill="none" stroke-linecap="round" stroke-linejoin="round" stroke-opacity="0.8"><path d="M809.3 419.5H799.8M804.2 415.4L799.5 419.5L804.2 423.6"/><path d="M818.7 419.5H828.8M824.4 415.4L829.1 419.5L824.4 423.6"/></g>
<g transform="translate(0,0) rotate(3.5 814 419.5)" stroke="#ffffff" stroke-width="2.1" fill="none" stroke-linecap="round" stroke-linejoin="round" stroke-opacity="1"><path d="M809.3 419.5H799.8M804.2 415.4L799.5 419.5L804.2 423.6"/><path d="M818.7 419.5H828.8M824.4 415.4L829.1 419.5L824.4 423.6"/></g>
<g>
<line x1="1188.7" y1="33.2" x2="1188.7" y2="99.6" stroke="#2c85e0" stroke-width="1.7"/>
<line x1="1155.2" y1="66.6" x2="1223" y2="66.6" stroke="#7db318" stroke-width="1.7"/>
<circle cx="1155.2" cy="66.6" r="7.6" fill="#52642f" stroke="#7db318" stroke-width="1.5"/>
<circle cx="1222.2" cy="66.6" r="8.4" fill="#7db318"/>
<circle cx="1188.7" cy="99.6" r="7.6" fill="#3b5577" stroke="#2c85e0" stroke-width="1.5"/>
<circle cx="1188.7" cy="33.2" r="8.4" fill="#2f83d8"/>
<circle cx="1188.7" cy="66.6" r="9" fill="#ff3352"/>
<text x="1188.7" y="37.0" font-family="Liberation Sans, sans-serif" font-size="10.5" stroke="#0c1a33" stroke-width="0.35" fill="#0c1a33" text-anchor="middle">Z</text>
<text x="1188.7" y="70.4" font-family="Liberation Sans, sans-serif" font-size="10.5" stroke="#2b0510" stroke-width="0.35" fill="#2b0510" text-anchor="middle">X</text>
</g>
<circle cx="1217" cy="123.3" r="14" fill="#2e2e2e" fill-opacity="0.95"/>
<circle cx="1217" cy="154.6" r="14" fill="#2e2e2e" fill-opacity="0.95"/>
<circle cx="1217" cy="186.6" r="14" fill="#2e2e2e" fill-opacity="0.95"/>
<circle cx="1217" cy="217.7" r="14" fill="#2e2e2e" fill-opacity="0.95"/>
<circle cx="1216" cy="122.1" r="7" fill="#d6d6d6"/><path d="M1212.4 122.6h6.4M1215.6 119.4v6.4" stroke="#777" stroke-width="1.5" fill="none"/>
<g stroke="#dcdcdc" stroke-linecap="round" fill="none"><path d="M1214.1 148.3L1215.7 158.5" stroke-width="2.5"/><path d="M1210 155.9L1214.6 160.6" stroke-width="2.6"/></g><path d="M1213.4 157.2L1218 155.4V166H1217L1212.4 160.2z" fill="#dcdcdc"/>
<g fill="none" stroke="#d2d2d2" stroke-width="1.5"><circle cx="1212.7" cy="183.6" r="2.6"/><circle cx="1219.2" cy="182.6" r="3.4"/><rect x="1214.2" y="189.4" width="8" height="5.6" rx="1.2"/></g><path d="M1213.6 192.2l-2.8-2v4z" fill="#d2d2d2"/><circle cx="1212.7" cy="183.6" r="0.9" fill="#d2d2d2"/>
<g fill="none" stroke="#d0d0d0" stroke-width="1.6"><path d="M1209.8 208.5v17.4M1215.6 208.5v17.4M1209 209.3h9M1209 214.6h9M1209 220.1h9M1209 225.1h9"/></g>
</svg>
<div class="layer">
<div class="hdr"></div>
<div class="ln"><span class="w" style="left:-4.00px;top:26.00px;font-size:12.0px;line-height:13.788px;letter-spacing:0.058px">Right</span> <span class="w" style="left:27.90px;top:26.00px;font-size:12.0px;line-height:13.788px;letter-spacing:0.103px">Orthographic</span></div>
<div class="ln"><span class="w" style="left:-1.60px;top:44.00px;font-size:12.0px;line-height:13.788px;letter-spacing:-0.288px">(1)</span> <span class="w" style="left:16.40px;top:44.00px;font-size:12.0px;line-height:13.788px;letter-spacing:0.111px">Cylinder</span> <span class="w bar" style="left:64.1px;top:39px;font-size:15px;line-height:17.2px">|</span> <span class="w" style="left:72.30px;top:44.00px;font-size:12.0px;line-height:13.788px;letter-spacing:0.111px">Cylinder</span></div>
<div class="ln"><span class="w" style="left:-2.20px;top:62.00px;font-size:12.0px;line-height:13.788px;letter-spacing:0.427px">10</span> <span class="w" style="left:15.30px;top:62.00px;font-size:12.0px;line-height:13.788px;letter-spacing:0.138px">Centimeters</span></div>
<div class="ln"><span class="h" style="left:506.40px;top:-3.26px;font-size:12.0px;line-height:13.788px;letter-spacing:0.008px">Scale:</span> <span class="h" style="left:544.20px;top:-3.26px;font-size:12.0px;line-height:13.788px;letter-spacing:-0.183px">0.9289</span> <span class="h" style="left:588.30px;top:-3.26px;font-size:12.0px;line-height:13.788px;letter-spacing:-0.012px">along</span> <span class="h" style="left:621.50px;top:-3.26px;font-size:12.0px;line-height:13.788px;letter-spacing:-0.321px">global</span> <span class="h" style="left:658.20px;top:-3.26px;font-size:12.0px;line-height:13.788px;letter-spacing:-1.604px">Y</span></div>
</div>
</body></html>
